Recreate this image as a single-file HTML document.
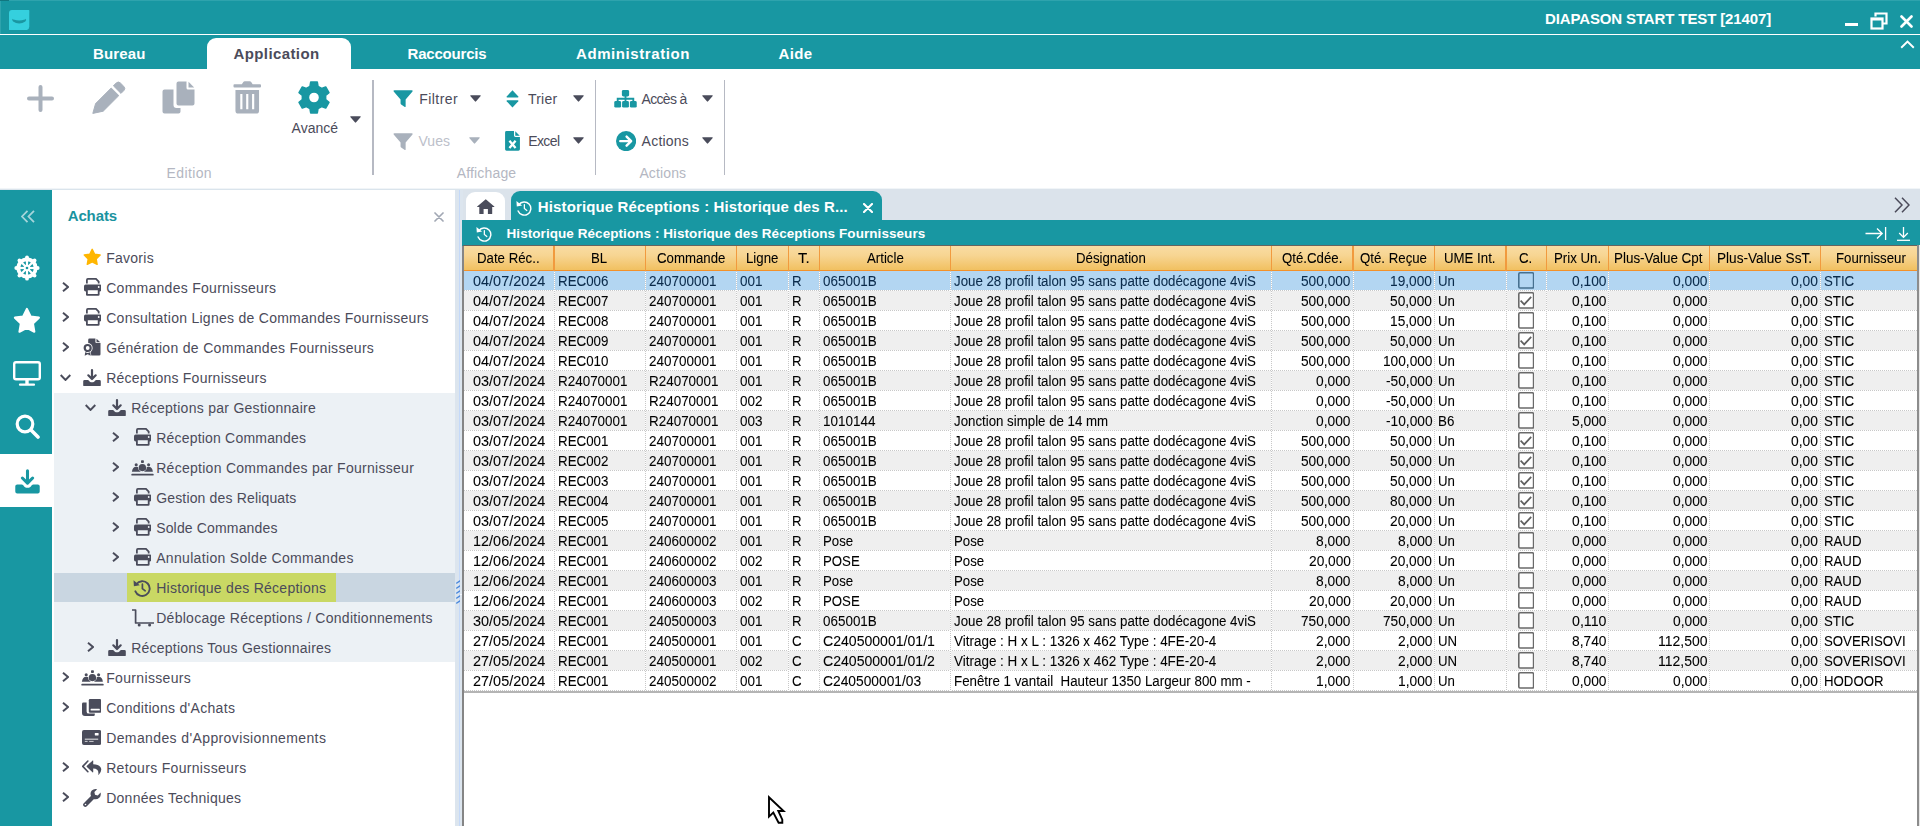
<!DOCTYPE html>
<html><head><meta charset="utf-8"><title>DIAPASON START TEST [21407]</title>
<style>
html,body{margin:0;padding:0;}
body{width:1920px;height:826px;overflow:hidden;background:#fff;position:relative;font-family:"Liberation Sans",sans-serif;}
.b{position:absolute;display:block;}
.t{position:absolute;white-space:pre;font-family:"Liberation Sans",sans-serif;}

.cb{width:13.2px;height:13.2px;border:1.6px solid #686868;background:#fff;border-radius:1.5px;}
.hl{position:absolute;height:1px;background-image:repeating-linear-gradient(90deg,#c8c8c8 0,#c8c8c8 1px,transparent 1px,transparent 2px);}
.vl{position:absolute;width:1px;background-color:#fff;background-image:repeating-linear-gradient(180deg,#c8c8c8 0,#c8c8c8 1px,transparent 1px,transparent 2px);}

</style></head><body>
<div class="b" style="left:0px;top:0px;width:1920px;height:34px;background:#1897a2;"></div>
<div class="b" style="left:0px;top:34px;width:1920px;height:1px;background:#ffffff;"></div>
<div class="b" style="left:0px;top:35px;width:1920px;height:34px;background:#1897a2;"></div>
<div class="b" style="left:0px;top:0px;width:1920px;height:1px;background:#2ea3ad;"></div>
<div class="b" style="left:0px;top:0px;width:1px;height:34px;background:#2ea3ad;"></div>
<div class="b" style="left:0px;top:0px;width:9px;height:1px;background:#127780;"></div>
<svg class="b" style="left:9.3px;top:9.9px;" width="20.3" height="20.1" viewBox="0 0 20.300 20.100"><path d="M3 0 H19.800 Q20.300 0 20.300 0.5 V16.600 Q20.300 20.100 16.800 20.100 H0.5 Q0 20.100 0 19.600 V3 Q0 0 3 0Z" fill="#35d0de"/><path d="M3.500 8.800 Q4.300 10.200 10.200 10.500 Q16.100 10.200 16.900 8.800 Q17.700 10.200 16.300 11.500 Q13.500 13.500 10.200 13.500 Q6.900 13.500 4.100 11.500 Q2.700 10.200 3.500 8.800Z" fill="#1a97a2"/></svg>
<div class="t" style="left:1545.00px;top:11.00px;font-size:15px;line-height:15px;color:#fff;font-weight:bold;letter-spacing:-0.129px;">DIAPASON START TEST [21407]</div>
<div class="b" style="left:1845px;top:23px;width:13px;height:2.5px;background:#fff;"></div>
<svg class="b" style="left:1870px;top:12px;" width="18" height="18" viewBox="0 0 18 18"><path d="M5.500 4.500 V1.500 H16.500 V11.500 H13" stroke="#fff" stroke-width="2.200" fill="none"/><rect x="1.500" y="6.500" width="11" height="10" stroke="#fff" stroke-width="2.200" fill="none"/><rect x="1.500" y="6" width="11" height="2.500" fill="#fff"/></svg>
<svg class="b" style="left:1900px;top:15px;" width="13" height="13" viewBox="0 0 13 13"><path d="M1.500 1.500 L11.500 11.500 M11.500 1.500 L1.500 11.500" stroke="#fff" stroke-width="2.600" fill="none" stroke-linecap="round"/></svg>
<svg class="b" style="left:1900px;top:40px;" width="15" height="9" viewBox="0 0 15 9"><path d="M1.200 7.800 L7.500 1.600 L13.800 7.800" stroke="#fff" stroke-width="1.900" fill="none"/></svg>
<div class="b" style="left:207px;top:38px;width:144px;height:31px;background:#fff;border-radius:9px 9px 0 0;"></div>
<div class="t" style="left:93.00px;top:45.80px;font-size:15px;line-height:15px;color:#fff;font-weight:bold;letter-spacing:0.153px;">Bureau</div>
<div class="t" style="left:233.50px;top:45.80px;font-size:15px;line-height:15px;color:#4b4b5a;font-weight:bold;letter-spacing:0.394px;">Application</div>
<div class="t" style="left:407.50px;top:45.80px;font-size:15px;line-height:15px;color:#fff;font-weight:bold;letter-spacing:-0.188px;">Raccourcis</div>
<div class="t" style="left:576.00px;top:45.80px;font-size:15px;line-height:15px;color:#fff;font-weight:bold;letter-spacing:0.583px;">Administration</div>
<div class="t" style="left:778.50px;top:45.80px;font-size:15px;line-height:15px;color:#fff;font-weight:bold;letter-spacing:0.374px;">Aide</div>
<svg class="b" style="left:27px;top:84.5px;" width="27" height="27" viewBox="0 0 27 27"><path d="M13.5 2v23M2 13.500h23" stroke="#a9b1bc" stroke-width="4" stroke-linecap="round" fill="none"/></svg>
<svg class="b" style="left:92px;top:81px;" width="34" height="33" viewBox="0 0 34 33"><path d="M0.8 32.4 L3.6 22.6 L19.2 7 L26.800 14.600 L11.2 30.2 Z" fill="#a9b1bc" stroke="#a9b1bc" stroke-width="1" stroke-linejoin="round"/><path d="M21.4 4.8 L24.2 2 Q26.3 0 28.4 2 L31.800 5.400 Q33.800 7.500 31.800 9.600 L29 12.400 Z" fill="#a9b1bc" stroke="#a9b1bc" stroke-width="1" stroke-linejoin="round"/></svg>
<svg class="b" style="left:162.3px;top:81px;" width="33" height="33" viewBox="0 0 33 33"><path d="M2.5 8.500 H11.5 V24 Q11.5 27 14.5 27 H18.5 V30.5 Q18.5 32.5 16.5 32.5 H2.5 Q0.5 32.5 0.5 30.5 V10.5 Q0.5 8.500 2.5 8.500Z" fill="#a9b1bc"/><path d="M16.500 0.5 H24.500 V7 Q24.500 8.500 26 8.500 H32.5 V22.500 Q32.5 24.500 30.5 24.500 H16.500 Q14.500 24.500 14.500 22.500 V2.500 Q14.500 0.5 16.500 0.5Z" fill="#a9b1bc"/><path d="M26.5 0.8 L32.2 6.500 H26.5Z" fill="#a9b1bc"/></svg>
<svg class="b" style="left:232.5px;top:81.2px;" width="28.5" height="32.8" viewBox="0 0 29 33"><path d="M1.5 3 H9 L10.500 0.8 Q11 0 12 0 H17 Q18 0 18.500 0.8 L20 3 H27.500 Q28.500 3 28.500 4 V5.500 Q28.500 6.500 27.500 6.500 H1.5 Q0.5 6.500 0.5 5.500 V4 Q0.5 3 1.5 3Z" fill="#a9b1bc"/><path d="M2.5 9 H26.5 V30 Q26.5 33 23.500 33 H5.500 Q2.5 33 2.5 30Z" fill="#a9b1bc"/><path d="M8.500 13v15.500M14.500 13v15.500M20.500 13v15.500" stroke="#fff" stroke-width="2.2" fill="none"/></svg>
<svg class="b" style="left:297.9px;top:80.7px;" width="32" height="33" viewBox="0 0 32 33"><path d="M12.00 5.40 L12.74 1.14 L19.26 1.14 L20.00 5.40 L23.62 7.49 L27.67 5.99 L30.93 11.65 L27.61 14.41 L27.61 18.59 L30.93 21.35 L27.67 27.01 L23.62 25.51 L20.00 27.60 L19.26 31.86 L12.74 31.86 L12.00 27.60 L8.38 25.51 L4.33 27.01 L1.07 21.35 L4.39 18.59 L4.39 14.41 L1.07 11.65 L4.33 5.99 L8.38 7.49Z M10.40 16.50 a5.60 5.60 0 1 0 11.20 0 a5.60 5.60 0 1 0 -11.20 0Z" fill="#1897a2" fill-rule="evenodd" stroke="#1897a2" stroke-width="1.6" stroke-linejoin="round"/></svg>
<div class="t" style="left:291.60px;top:120.65px;font-size:14px;line-height:14px;color:#4b4b5a;letter-spacing:-0.024px;">Avancé</div>
<svg class="b" style="left:350.2px;top:115.8px;" width="11" height="7" viewBox="0 0 11 7"><path d="M0.9 0.2 H10.100 Q11.300 0.2 10.500 1.200 L6.100 6.300 Q5.500 7 4.900 6.300 L0.5 1.200 Q-0.3 0.2 0.9 0.2Z" fill="#4a4c5b"/></svg>
<div class="b" style="left:372.4px;top:80px;width:1.2px;height:95px;background:#b6b9c3;"></div>
<div class="b" style="left:595px;top:80px;width:1.2px;height:95px;background:#b6b9c3;"></div>
<div class="b" style="left:724px;top:80px;width:1.2px;height:95px;background:#b6b9c3;"></div>
<svg class="b" style="left:393.4px;top:90px;" width="20.2" height="17.6" viewBox="0 0 20 18"><path d="M1.200 0.3 H18.800 Q20.500 0.3 19.400 1.900 L12.600 9.600 V16.600 Q12.600 18 11.400 17.200 L8 14.800 Q7.400 14.400 7.400 13.600 V9.600 L0.6 1.900 Q-0.5 0.3 1.200 0.3Z" fill="#1897a2"/></svg>
<div class="t" style="left:419.30px;top:91.95px;font-size:14px;line-height:14px;color:#4b4b5a;letter-spacing:0.432px;">Filtrer</div>
<svg class="b" style="left:469.6px;top:95.2px;" width="11" height="7" viewBox="0 0 11 7"><path d="M0.9 0.2 H10.100 Q11.300 0.2 10.500 1.200 L6.100 6.300 Q5.500 7 4.900 6.300 L0.5 1.200 Q-0.3 0.2 0.9 0.2Z" fill="#4a4c5b"/></svg>
<svg class="b" style="left:505.7px;top:90px;" width="13" height="17.8" viewBox="0 0 13 18"><path d="M6.500 0.3 L12.400 6.600 Q13 7.600 11.800 7.600 H1.200 Q0 7.600 0.6 6.600Z" fill="#1897a2"/><path d="M6.500 17.700 L12.400 11.400 Q13 10.400 11.800 10.400 H1.200 Q0 10.400 0.6 11.400Z" fill="#1897a2"/></svg>
<div class="t" style="left:527.90px;top:91.95px;font-size:14px;line-height:14px;color:#4b4b5a;letter-spacing:0.269px;">Trier</div>
<svg class="b" style="left:573.2px;top:95.2px;" width="11" height="7" viewBox="0 0 11 7"><path d="M0.9 0.2 H10.100 Q11.300 0.2 10.500 1.200 L6.100 6.300 Q5.500 7 4.900 6.300 L0.5 1.200 Q-0.3 0.2 0.9 0.2Z" fill="#4a4c5b"/></svg>
<svg class="b" style="left:614.4px;top:90px;" width="23" height="17.6" viewBox="0 0 23 18"><rect x="7.800" y="0" width="7.400" height="6.600" rx="1.500" fill="#1897a2"/><rect x="0" y="11.300" width="7" height="6.700" rx="1.500" fill="#1897a2"/><rect x="8" y="11.300" width="7" height="6.700" rx="1.500" fill="#1897a2"/><rect x="16" y="11.300" width="7" height="6.700" rx="1.500" fill="#1897a2"/><path d="M11.500 6v6M3.500 12V8.900H19.500V12" stroke="#1897a2" stroke-width="1.900" fill="none"/></svg>
<div class="t" style="left:641.60px;top:91.95px;font-size:14px;line-height:14px;color:#4b4b5a;letter-spacing:-0.686px;">Accès à</div>
<svg class="b" style="left:701.9px;top:95.2px;" width="11" height="7" viewBox="0 0 11 7"><path d="M0.9 0.2 H10.100 Q11.300 0.2 10.500 1.200 L6.100 6.300 Q5.500 7 4.900 6.300 L0.5 1.200 Q-0.3 0.2 0.9 0.2Z" fill="#4a4c5b"/></svg>
<svg class="b" style="left:393.4px;top:132.5px;" width="20.2" height="17.6" viewBox="0 0 20 18"><path d="M1.200 0.3 H18.800 Q20.500 0.3 19.400 1.900 L12.600 9.600 V16.600 Q12.600 18 11.400 17.200 L8 14.800 Q7.400 14.400 7.400 13.600 V9.600 L0.6 1.900 Q-0.5 0.3 1.200 0.3Z" fill="#a9b1bc"/></svg>
<div class="t" style="left:418.50px;top:134.15px;font-size:14px;line-height:14px;color:#bcc0ca;letter-spacing:0.027px;">Vues</div>
<svg class="b" style="left:469.4px;top:137.4px;" width="11" height="7" viewBox="0 0 11 7"><path d="M0.9 0.2 H10.100 Q11.300 0.2 10.500 1.200 L6.100 6.300 Q5.500 7 4.900 6.300 L0.5 1.200 Q-0.3 0.2 0.9 0.2Z" fill="#a9b1bc"/></svg>
<svg class="b" style="left:504.7px;top:131.3px;" width="15" height="19.8" viewBox="0 0 15 20"><path d="M1.500 0 H9 V4.500 Q9 6 10.500 6 H15 V18.500 Q15 20 13.500 20 H1.500 Q0 20 0 18.500 V1.500 Q0 0 1.500 0Z" fill="#1897a2"/><path d="M10.300 0.2 L14.800 4.800 H10.300Z" fill="#1897a2"/><path d="M4.400 9.800 L10.600 17.200 M10.600 9.800 L4.400 17.200" stroke="#fff" stroke-width="2.300" fill="none"/></svg>
<div class="t" style="left:528.20px;top:134.15px;font-size:14px;line-height:14px;color:#4b4b5a;letter-spacing:-0.607px;">Excel</div>
<svg class="b" style="left:573.2px;top:137.4px;" width="11" height="7" viewBox="0 0 11 7"><path d="M0.9 0.2 H10.100 Q11.300 0.2 10.500 1.200 L6.100 6.300 Q5.500 7 4.900 6.300 L0.5 1.200 Q-0.3 0.2 0.9 0.2Z" fill="#4a4c5b"/></svg>
<svg class="b" style="left:616px;top:131px;" width="20.2" height="20.2" viewBox="0 0 20 20"><circle cx="10" cy="10" r="10" fill="#1897a2"/><path d="M4.200 10 H14.500 M10.500 5.500 L15 10 L10.500 14.500" stroke="#fff" stroke-width="2.400" fill="none" stroke-linecap="round" stroke-linejoin="round"/></svg>
<div class="t" style="left:641.60px;top:134.15px;font-size:14px;line-height:14px;color:#4b4b5a;letter-spacing:0.227px;">Actions</div>
<svg class="b" style="left:701.9px;top:137.4px;" width="11" height="7" viewBox="0 0 11 7"><path d="M0.9 0.2 H10.100 Q11.300 0.2 10.500 1.200 L6.100 6.300 Q5.500 7 4.900 6.300 L0.5 1.200 Q-0.3 0.2 0.9 0.2Z" fill="#4a4c5b"/></svg>
<div class="t" style="left:166.60px;top:166.15px;font-size:14px;line-height:14px;color:#b4b7c2;letter-spacing:0.370px;">Edition</div>
<div class="t" style="left:456.70px;top:166.15px;font-size:14px;line-height:14px;color:#b4b7c2;letter-spacing:0.164px;">Affichage</div>
<div class="t" style="left:639.40px;top:166.15px;font-size:14px;line-height:14px;color:#b4b7c2;letter-spacing:0.127px;">Actions</div>
<div class="b" style="left:0px;top:188px;width:1920px;height:1px;background:#f1f5f8;"></div>
<div class="b" style="left:0px;top:189px;width:1920px;height:1px;background:#dae4ec;"></div>
<div class="b" style="left:0px;top:190px;width:52.4px;height:636px;background:#1897a2;"></div>
<div class="b" style="left:0px;top:454px;width:52.4px;height:53px;background:#fff;"></div>
<svg class="b" style="left:21px;top:210px;" width="14" height="13" viewBox="0 0 14 13"><path d="M6.500 0.8 L1 6.500 L6.500 12.200 M13 0.8 L7.500 6.500 L13 12.200" stroke="#a6d5da" stroke-width="1.800" fill="none"/></svg>
<svg class="b" style="left:14.3px;top:255.4px;" width="26" height="26" viewBox="0 0 26 26"><circle cx="13" cy="13" r="8.700" stroke="#fff" stroke-width="3.800" fill="none"/><path d="M15.00 13.00L21.00 13.00" stroke="#fff" stroke-width="2.200"/><circle cx="23.70" cy="13.00" r="1.900" fill="#fff"/><path d="M14.41 14.41L18.66 18.66" stroke="#fff" stroke-width="2.200"/><circle cx="20.57" cy="20.57" r="1.900" fill="#fff"/><path d="M13.00 15.00L13.00 21.00" stroke="#fff" stroke-width="2.200"/><circle cx="13.00" cy="23.70" r="1.900" fill="#fff"/><path d="M11.59 14.41L7.34 18.66" stroke="#fff" stroke-width="2.200"/><circle cx="5.43" cy="20.57" r="1.900" fill="#fff"/><path d="M11.00 13.00L5.00 13.00" stroke="#fff" stroke-width="2.200"/><circle cx="2.30" cy="13.00" r="1.900" fill="#fff"/><path d="M11.59 11.59L7.34 7.34" stroke="#fff" stroke-width="2.200"/><circle cx="5.43" cy="5.43" r="1.900" fill="#fff"/><path d="M13.00 11.00L13.00 5.00" stroke="#fff" stroke-width="2.200"/><circle cx="13.00" cy="2.30" r="1.900" fill="#fff"/><path d="M14.41 11.59L18.66 7.34" stroke="#fff" stroke-width="2.200"/><circle cx="20.57" cy="5.43" r="1.900" fill="#fff"/><circle cx="13" cy="13" r="3.300" fill="#fff"/><circle cx="13" cy="13" r="1.300" fill="#1897a2"/></svg>
<svg class="b" style="left:13.4px;top:306.6px;" width="27.8" height="27.8" viewBox="0 0 26 26"><path d="M13.00 1.80 L16.47 8.83 L24.22 9.95 L18.61 15.42 L19.94 23.15 L13.00 19.50 L6.06 23.15 L7.39 15.42 L1.78 9.95 L9.53 8.83Z" fill="#fff" stroke="#fff" stroke-width="2" stroke-linejoin="round"/></svg>
<svg class="b" style="left:13.2px;top:361.4px;" width="28" height="25" viewBox="0 0 28 25"><rect x="1.200" y="1.200" width="25.600" height="17" rx="1.800" stroke="#fff" stroke-width="2.400" fill="none"/><path d="M14 18.500v4.500" stroke="#fff" stroke-width="3.400"/><path d="M7 23.700h14" stroke="#fff" stroke-width="2.200" stroke-linecap="round"/></svg>
<svg class="b" style="left:15px;top:413.8px;" width="25" height="25" viewBox="0 0 25 25"><circle cx="10" cy="10" r="7.800" stroke="#fff" stroke-width="3.200" fill="none"/><path d="M16 16 L23 23" stroke="#fff" stroke-width="3.600" stroke-linecap="round"/></svg>
<svg class="b" style="left:15px;top:469px;" width="25" height="24.8" viewBox="0 0 18 17.500"><path d="M9 1.100 V9.400 M5.300 6.300 L9 10 L12.700 6.300" stroke="#1897a2" stroke-width="2.200" fill="none" stroke-linecap="round" stroke-linejoin="round"/><path d="M1.600 10.900 H4.800 Q5.400 10.900 5.800 11.400 L6.600 12.500 Q7.200 13.300 8 13.300 H10 Q10.800 13.300 11.400 12.500 L12.200 11.400 Q12.600 10.900 13.200 10.900 H16.400 Q17.800 10.900 17.800 12.300 V16.100 Q17.800 17.500 16.400 17.500 H1.600 Q0.2 17.500 0.2 16.100 V12.300 Q0.2 10.900 1.600 10.900Z" fill="#1897a2"/></svg>
<div class="b" style="left:52px;top:190px;width:403px;height:636px;background:#fff;"></div>
<div class="t" style="left:67.70px;top:207.60px;font-size:15px;line-height:15px;color:#1a93a0;font-weight:bold;letter-spacing:-0.120px;">Achats</div>
<svg class="b" style="left:433.8px;top:211.6px;" width="10" height="10" viewBox="0 0 10 10"><path d="M1 1 L9 9 M9 1 L1 9" stroke="#a2a8b4" stroke-width="1.7" fill="none" stroke-linecap="round"/></svg>
<div class="b" style="left:54px;top:392.5px;width:401px;height:269.7px;background:#ecf1f5;"></div>
<div class="b" style="left:54px;top:572.7px;width:401px;height:29.3px;background:#c9d6e1;"></div>
<div class="b" style="left:127px;top:573px;width:209px;height:29px;background:#c9d864;"></div>
<svg class="b" style="left:82.6px;top:248.0px;" width="18.4" height="18.4" viewBox="0 0 26 26"><path d="M13.00 1.80 L16.47 8.83 L24.22 9.95 L18.61 15.42 L19.94 23.15 L13.00 19.50 L6.06 23.15 L7.39 15.42 L1.78 9.95 L9.53 8.83Z" fill="#ffb600" stroke="#ffb600" stroke-width="2" stroke-linejoin="round"/></svg>
<div class="t" style="left:106.20px;top:250.65px;font-size:14px;line-height:14px;color:#4b4b5a;letter-spacing:0.257px;">Favoris</div>
<svg class="b" style="left:62px;top:281.8px;" width="7" height="10" viewBox="0 0 7 10"><path d="M1 0.7 L6 5 L1 9.300" stroke="#4a4c5b" stroke-width="1.900" fill="none"/></svg>
<svg class="b" style="left:83.60000000000001px;top:278.40000000000003px;" width="17.6" height="17.8" viewBox="0 0 17.600 17.800"><path d="M2.900 5.600 V1.900 Q2.900 0.9 3.900 0.9 H12 L14.700 3.600 V5.600" stroke="#4a4c5b" stroke-width="1.750" fill="none"/><rect x="0" y="6.500" width="17.600" height="6.900" rx="1.700" fill="#4a4c5b"/><rect x="2.900" y="11.300" width="11.800" height="5.600" rx="0.4" stroke="#4a4c5b" stroke-width="1.800" fill="#fff"/><circle cx="14.700" cy="9" r="0.9" fill="#fff"/></svg>
<div class="t" style="left:106.20px;top:280.65px;font-size:14px;line-height:14px;color:#4b4b5a;letter-spacing:0.274px;">Commandes Fournisseurs</div>
<svg class="b" style="left:62px;top:311.8px;" width="7" height="10" viewBox="0 0 7 10"><path d="M1 0.7 L6 5 L1 9.300" stroke="#4a4c5b" stroke-width="1.900" fill="none"/></svg>
<svg class="b" style="left:83.60000000000001px;top:308.40000000000003px;" width="17.6" height="17.8" viewBox="0 0 17.600 17.800"><path d="M2.900 5.600 V1.900 Q2.900 0.9 3.900 0.9 H12 L14.700 3.600 V5.600" stroke="#4a4c5b" stroke-width="1.750" fill="none"/><rect x="0" y="6.500" width="17.600" height="6.900" rx="1.700" fill="#4a4c5b"/><rect x="2.900" y="11.300" width="11.800" height="5.600" rx="0.4" stroke="#4a4c5b" stroke-width="1.800" fill="#fff"/><circle cx="14.700" cy="9" r="0.9" fill="#fff"/></svg>
<div class="t" style="left:106.20px;top:310.65px;font-size:14px;line-height:14px;color:#4b4b5a;letter-spacing:0.271px;">Consultation Lignes de Commandes Fournisseurs</div>
<svg class="b" style="left:62px;top:341.8px;" width="7" height="10" viewBox="0 0 7 10"><path d="M1 0.7 L6 5 L1 9.300" stroke="#4a4c5b" stroke-width="1.900" fill="none"/></svg>
<svg class="b" style="left:83.2px;top:338.3px;" width="18" height="18" viewBox="0 0 18 18"><path d="M6.500 0.6 H12.400 V4 Q12.400 5 13.400 5 H17.500 V16.300 Q17.500 17.600 16.200 17.600 H6.500 Q5.200 17.600 5.200 16.300 V1.900 Q5.200 0.6 6.500 0.6Z" fill="#4a4c5b"/><path d="M13.500 0.8 L17.300 4.200 H13.500Z" fill="#4a4c5b"/><path d="M2.400 12.500 L1.700 17.800 L4.700 16.200 L7.700 17.800 L7 12.500Z" fill="#4a4c5b" stroke="#fff" stroke-width="1.200" paint-order="stroke"/><circle cx="4.700" cy="10" r="4.900" fill="#fff"/><circle cx="4.700" cy="10" r="3" stroke="#4a4c5b" stroke-width="2.200" fill="#fff"/></svg>
<div class="t" style="left:106.20px;top:340.65px;font-size:14px;line-height:14px;color:#4b4b5a;letter-spacing:0.311px;">Génération de Commandes Fournisseurs</div>
<svg class="b" style="left:60.2px;top:374.3px;" width="11" height="7" viewBox="0 0 11 7"><path d="M0.7 1 L5.500 6 L10.300 1" stroke="#4a4c5b" stroke-width="1.900" fill="none"/></svg>
<svg class="b" style="left:83.2px;top:368.5px;" width="18" height="17.5" viewBox="0 0 18 17.500"><path d="M9 1.100 V9.400 M5.300 6.300 L9 10 L12.700 6.300" stroke="#4a4c5b" stroke-width="2.200" fill="none" stroke-linecap="round" stroke-linejoin="round"/><path d="M1.600 10.900 H4.800 Q5.400 10.900 5.800 11.400 L6.600 12.500 Q7.200 13.300 8 13.300 H10 Q10.800 13.300 11.400 12.500 L12.200 11.400 Q12.600 10.900 13.200 10.900 H16.400 Q17.800 10.900 17.800 12.300 V16.100 Q17.800 17.500 16.400 17.500 H1.600 Q0.2 17.500 0.2 16.100 V12.300 Q0.2 10.900 1.600 10.900Z" fill="#4a4c5b"/></svg>
<div class="t" style="left:106.20px;top:370.65px;font-size:14px;line-height:14px;color:#4b4b5a;letter-spacing:0.246px;">Réceptions Fournisseurs</div>
<svg class="b" style="left:85.2px;top:404.3px;" width="11" height="7" viewBox="0 0 11 7"><path d="M0.7 1 L5.500 6 L10.300 1" stroke="#4a4c5b" stroke-width="1.900" fill="none"/></svg>
<svg class="b" style="left:108.2px;top:398.5px;" width="18" height="17.5" viewBox="0 0 18 17.500"><path d="M9 1.100 V9.400 M5.300 6.300 L9 10 L12.700 6.300" stroke="#4a4c5b" stroke-width="2.200" fill="none" stroke-linecap="round" stroke-linejoin="round"/><path d="M1.600 10.900 H4.800 Q5.400 10.900 5.800 11.400 L6.600 12.500 Q7.200 13.300 8 13.300 H10 Q10.800 13.300 11.400 12.500 L12.200 11.400 Q12.600 10.900 13.200 10.900 H16.400 Q17.800 10.900 17.800 12.300 V16.100 Q17.800 17.500 16.400 17.500 H1.600 Q0.2 17.500 0.2 16.100 V12.300 Q0.2 10.900 1.600 10.900Z" fill="#4a4c5b"/></svg>
<div class="t" style="left:131.20px;top:400.65px;font-size:14px;line-height:14px;color:#4b4b5a;letter-spacing:0.276px;">Réceptions par Gestionnaire</div>
<svg class="b" style="left:112px;top:431.8px;" width="7" height="10" viewBox="0 0 7 10"><path d="M1 0.7 L6 5 L1 9.300" stroke="#4a4c5b" stroke-width="1.900" fill="none"/></svg>
<svg class="b" style="left:133.6px;top:428.40000000000003px;" width="17.6" height="17.8" viewBox="0 0 17.600 17.800"><path d="M2.900 5.600 V1.900 Q2.900 0.9 3.900 0.9 H12 L14.700 3.600 V5.600" stroke="#4a4c5b" stroke-width="1.750" fill="none"/><rect x="0" y="6.500" width="17.600" height="6.900" rx="1.700" fill="#4a4c5b"/><rect x="2.900" y="11.300" width="11.800" height="5.600" rx="0.4" stroke="#4a4c5b" stroke-width="1.800" fill="#ecf1f5"/><circle cx="14.700" cy="9" r="0.9" fill="#ecf1f5"/></svg>
<div class="t" style="left:156.20px;top:430.65px;font-size:14px;line-height:14px;color:#4b4b5a;letter-spacing:0.200px;">Réception Commandes</div>
<svg class="b" style="left:112px;top:461.8px;" width="7" height="10" viewBox="0 0 7 10"><path d="M1 0.7 L6 5 L1 9.300" stroke="#4a4c5b" stroke-width="1.900" fill="none"/></svg>
<svg class="b" style="left:131.0px;top:459.6px;" width="23" height="16" viewBox="0 0 23 16"><circle cx="5.2" cy="4.700" r="1.550" fill="#4a4c5b"/><path d="M0.90 11.800 Q1.60 6.700 5.20 6.700 Q8.80 6.700 9.50 11.800Z" fill="#4a4c5b"/><circle cx="17.6" cy="4.700" r="1.550" fill="#4a4c5b"/><path d="M13.30 11.800 Q14.00 6.700 17.60 6.700 Q21.20 6.700 21.90 11.800Z" fill="#4a4c5b"/><rect x="10" y="0.2" width="2.900" height="2.900" rx="0.8" fill="#4a4c5b"/><path d="M7.600 9.300 Q7.300 4 11.400 4 Q15.500 4 15.200 9.300 Q11.400 13.200 7.600 9.300Z" fill="#4a4c5b" stroke="#ecf1f5" stroke-width="1" paint-order="stroke"/><rect x="0.3" y="13.700" width="22.400" height="1.900" rx="0.9" fill="#4a4c5b"/></svg>
<div class="t" style="left:156.20px;top:460.65px;font-size:14px;line-height:14px;color:#4b4b5a;letter-spacing:0.276px;">Réception Commandes par Fournisseur</div>
<svg class="b" style="left:112px;top:491.8px;" width="7" height="10" viewBox="0 0 7 10"><path d="M1 0.7 L6 5 L1 9.300" stroke="#4a4c5b" stroke-width="1.900" fill="none"/></svg>
<svg class="b" style="left:133.6px;top:488.40000000000003px;" width="17.6" height="17.8" viewBox="0 0 17.600 17.800"><path d="M2.900 5.600 V1.900 Q2.900 0.9 3.900 0.9 H12 L14.700 3.600 V5.600" stroke="#4a4c5b" stroke-width="1.750" fill="none"/><rect x="0" y="6.500" width="17.600" height="6.900" rx="1.700" fill="#4a4c5b"/><rect x="2.900" y="11.300" width="11.800" height="5.600" rx="0.4" stroke="#4a4c5b" stroke-width="1.800" fill="#ecf1f5"/><circle cx="14.700" cy="9" r="0.9" fill="#ecf1f5"/></svg>
<div class="t" style="left:156.20px;top:490.65px;font-size:14px;line-height:14px;color:#4b4b5a;letter-spacing:0.159px;">Gestion des Reliquats</div>
<svg class="b" style="left:112px;top:521.8px;" width="7" height="10" viewBox="0 0 7 10"><path d="M1 0.7 L6 5 L1 9.300" stroke="#4a4c5b" stroke-width="1.900" fill="none"/></svg>
<svg class="b" style="left:133.6px;top:518.4px;" width="17.6" height="17.8" viewBox="0 0 17.600 17.800"><path d="M2.900 5.600 V1.900 Q2.900 0.9 3.900 0.9 H12 L14.700 3.600 V5.600" stroke="#4a4c5b" stroke-width="1.750" fill="none"/><rect x="0" y="6.500" width="17.600" height="6.900" rx="1.700" fill="#4a4c5b"/><rect x="2.900" y="11.300" width="11.800" height="5.600" rx="0.4" stroke="#4a4c5b" stroke-width="1.800" fill="#ecf1f5"/><circle cx="14.700" cy="9" r="0.9" fill="#ecf1f5"/></svg>
<div class="t" style="left:156.20px;top:520.65px;font-size:14px;line-height:14px;color:#4b4b5a;letter-spacing:0.156px;">Solde Commandes</div>
<svg class="b" style="left:112px;top:551.8px;" width="7" height="10" viewBox="0 0 7 10"><path d="M1 0.7 L6 5 L1 9.300" stroke="#4a4c5b" stroke-width="1.900" fill="none"/></svg>
<svg class="b" style="left:133.6px;top:548.4px;" width="17.6" height="17.8" viewBox="0 0 17.600 17.800"><path d="M2.900 5.600 V1.900 Q2.900 0.9 3.900 0.9 H12 L14.700 3.600 V5.600" stroke="#4a4c5b" stroke-width="1.750" fill="none"/><rect x="0" y="6.500" width="17.600" height="6.900" rx="1.700" fill="#4a4c5b"/><rect x="2.900" y="11.300" width="11.800" height="5.600" rx="0.4" stroke="#4a4c5b" stroke-width="1.800" fill="#ecf1f5"/><circle cx="14.700" cy="9" r="0.9" fill="#ecf1f5"/></svg>
<div class="t" style="left:156.20px;top:550.65px;font-size:14px;line-height:14px;color:#4b4b5a;letter-spacing:0.326px;">Annulation Solde Commandes</div>
<svg class="b" style="left:133.0px;top:578.5px;" width="18" height="18" viewBox="0 0 18 18"><path d="M3.300 5.200 A7.400 7.400 0 1 1 2.400 12.300" stroke="#4a4c5b" stroke-width="1.9" fill="none" stroke-linecap="round"/><path d="M0.5 1.200 L0.9 7.200 L6.800 6.300 Z" fill="#4a4c5b"/><path d="M9.400 5.200 V9.600 L12.200 11.800" stroke="#4a4c5b" stroke-width="1.7" fill="none" stroke-linecap="round"/></svg>
<div class="t" style="left:156.20px;top:580.65px;font-size:14px;line-height:14px;color:#4b4b5a;letter-spacing:0.271px;">Historique des Réceptions</div>
<svg class="b" style="left:131.89999999999998px;top:608.5px;" width="22" height="18" viewBox="0 0 22 18"><path d="M0.6 1 H3.600 V14 H21.400" stroke="#4a4c5b" stroke-width="1.700" fill="none" stroke-linecap="round" stroke-linejoin="round"/><circle cx="7.200" cy="16" r="1.500" fill="#4a4c5b"/><circle cx="17.600" cy="16" r="1.500" fill="#4a4c5b"/></svg>
<div class="t" style="left:156.20px;top:610.65px;font-size:14px;line-height:14px;color:#4b4b5a;letter-spacing:0.285px;">Déblocage Réceptions / Conditionnements</div>
<svg class="b" style="left:87px;top:641.8px;" width="7" height="10" viewBox="0 0 7 10"><path d="M1 0.7 L6 5 L1 9.300" stroke="#4a4c5b" stroke-width="1.900" fill="none"/></svg>
<svg class="b" style="left:108.2px;top:638.5px;" width="18" height="17.5" viewBox="0 0 18 17.500"><path d="M9 1.100 V9.400 M5.300 6.300 L9 10 L12.700 6.300" stroke="#4a4c5b" stroke-width="2.200" fill="none" stroke-linecap="round" stroke-linejoin="round"/><path d="M1.600 10.900 H4.800 Q5.400 10.900 5.800 11.400 L6.600 12.500 Q7.200 13.300 8 13.300 H10 Q10.800 13.300 11.400 12.500 L12.200 11.400 Q12.600 10.900 13.200 10.900 H16.400 Q17.800 10.900 17.800 12.300 V16.100 Q17.800 17.500 16.400 17.500 H1.600 Q0.2 17.500 0.2 16.100 V12.300 Q0.2 10.900 1.600 10.900Z" fill="#4a4c5b"/></svg>
<div class="t" style="left:131.20px;top:640.65px;font-size:14px;line-height:14px;color:#4b4b5a;letter-spacing:0.227px;">Réceptions Tous Gestionnaires</div>
<svg class="b" style="left:62px;top:671.8px;" width="7" height="10" viewBox="0 0 7 10"><path d="M1 0.7 L6 5 L1 9.300" stroke="#4a4c5b" stroke-width="1.900" fill="none"/></svg>
<svg class="b" style="left:81.0px;top:669.5999999999999px;" width="23" height="16" viewBox="0 0 23 16"><circle cx="5.2" cy="4.700" r="1.550" fill="#4a4c5b"/><path d="M0.90 11.800 Q1.60 6.700 5.20 6.700 Q8.80 6.700 9.50 11.800Z" fill="#4a4c5b"/><circle cx="17.6" cy="4.700" r="1.550" fill="#4a4c5b"/><path d="M13.30 11.800 Q14.00 6.700 17.60 6.700 Q21.20 6.700 21.90 11.800Z" fill="#4a4c5b"/><rect x="10" y="0.2" width="2.900" height="2.900" rx="0.8" fill="#4a4c5b"/><path d="M7.600 9.300 Q7.300 4 11.400 4 Q15.500 4 15.200 9.300 Q11.400 13.200 7.600 9.300Z" fill="#4a4c5b" stroke="#fff" stroke-width="1" paint-order="stroke"/><rect x="0.3" y="13.700" width="22.400" height="1.900" rx="0.9" fill="#4a4c5b"/></svg>
<div class="t" style="left:106.20px;top:670.65px;font-size:14px;line-height:14px;color:#4b4b5a;letter-spacing:0.340px;">Fournisseurs</div>
<svg class="b" style="left:62px;top:701.8px;" width="7" height="10" viewBox="0 0 7 10"><path d="M1 0.7 L6 5 L1 9.300" stroke="#4a4c5b" stroke-width="1.900" fill="none"/></svg>
<svg class="b" style="left:82.2px;top:698.8px;" width="19.2" height="17" viewBox="0 0 19.200 17"><path d="M1.400 3.600 H4.600 V12.400 Q4.600 14.600 6.800 14.600 H12.800 V15.700 Q12.800 17 11.500 17 H3 Q0 17 0 14 V5 Q0 3.600 1.400 3.600Z" fill="#4a4c5b"/><rect x="6.800" y="0" width="12.400" height="13.700" rx="1.300" fill="#4a4c5b"/><rect x="8.600" y="9.800" width="9.200" height="1.700" rx="0.5" fill="#fff"/></svg>
<div class="t" style="left:106.20px;top:700.65px;font-size:14px;line-height:14px;color:#4b4b5a;letter-spacing:0.300px;">Conditions d'Achats</div>
<svg class="b" style="left:82.0px;top:729.8px;" width="19.3" height="15" viewBox="0 0 19.300 15"><rect x="0" y="0" width="19.300" height="15" rx="1.900" fill="#4a4c5b"/><rect x="12.800" y="2.900" width="3.800" height="2.500" rx="0.4" fill="#fff"/><rect x="2.800" y="8.700" width="13.400" height="0.9" fill="#fff"/><rect x="2.800" y="10.900" width="2.800" height="0.9" fill="#fff" opacity="0.8"/><rect x="7.200" y="10.900" width="4.400" height="0.9" fill="#fff" opacity="0.8"/></svg>
<div class="t" style="left:106.20px;top:730.65px;font-size:14px;line-height:14px;color:#4b4b5a;letter-spacing:0.386px;">Demandes d'Approvisionnements</div>
<svg class="b" style="left:62px;top:761.8px;" width="7" height="10" viewBox="0 0 7 10"><path d="M1 0.7 L6 5 L1 9.300" stroke="#4a4c5b" stroke-width="1.900" fill="none"/></svg>
<svg class="b" style="left:82.0px;top:759.6999999999999px;" width="20.3" height="16" viewBox="0 0 19 15"><path d="M10.500 4 V0.8 Q10.500 0 9.800 0.6 L4.600 5.400 Q4 6 4.600 6.600 L9.800 11.400 Q10.500 12 10.500 11.200 V8 Q16 8 15.300 13.500 Q15.200 14.600 15.900 13.700 Q19.400 9.500 17.200 6.500 Q15.300 4 10.500 4Z" fill="#4a4c5b"/><path d="M5.500 1 L0.7 6 L5.500 11" stroke="#4a4c5b" stroke-width="1.500" fill="none" stroke-linecap="round" stroke-linejoin="round"/><path d="M7.800 2.500 L4.400 6 L7.800 9.500" stroke="#fff" stroke-width="0" fill="none"/></svg>
<div class="t" style="left:106.20px;top:760.65px;font-size:14px;line-height:14px;color:#4b4b5a;letter-spacing:0.323px;">Retours Fournisseurs</div>
<svg class="b" style="left:62px;top:791.8px;" width="7" height="10" viewBox="0 0 7 10"><path d="M1 0.7 L6 5 L1 9.300" stroke="#4a4c5b" stroke-width="1.900" fill="none"/></svg>
<svg class="b" style="left:82.7px;top:788.5px;" width="18" height="18" viewBox="0 0 18 18"><path d="M2.300 15.700 L10.200 7.800" stroke="#4a4c5b" stroke-width="4.300" stroke-linecap="round"/><path d="M17.600 3.600 L14.800 6.400 L12 5.800 L11.400 3 L14.200 0.3 Q11 -0.6 8.800 1.600 Q6.800 3.800 7.900 6.800 L10.200 10 Q13.800 11 16.300 8.800 Q18.300 6.700 17.600 3.600Z" fill="#4a4c5b"/><circle cx="2.500" cy="15.500" r="0.8" fill="#fff"/></svg>
<div class="t" style="left:106.20px;top:790.65px;font-size:14px;line-height:14px;color:#4b4b5a;letter-spacing:0.255px;">Données Techniques</div>
<div class="b" style="left:455px;top:190px;width:8px;height:636px;background:#dce5ee;"></div>
<div class="b" style="left:459px;top:190px;width:1px;height:636px;background:#c4d9f9;"></div>
<svg class="b" style="left:455.5px;top:580.2px;" width="4.5" height="4" viewBox="0 0 4.500 4"><path d="M0.8 3 L3.700 1" stroke="#4a88dc" stroke-width="1.500" stroke-linecap="round"/></svg>
<svg class="b" style="left:455.5px;top:585.2px;" width="4.5" height="4" viewBox="0 0 4.500 4"><path d="M0.8 3 L3.700 1" stroke="#4a88dc" stroke-width="1.500" stroke-linecap="round"/></svg>
<svg class="b" style="left:455.5px;top:590.2px;" width="4.5" height="4" viewBox="0 0 4.500 4"><path d="M0.8 3 L3.700 1" stroke="#4a88dc" stroke-width="1.500" stroke-linecap="round"/></svg>
<svg class="b" style="left:455.5px;top:595.2px;" width="4.5" height="4" viewBox="0 0 4.500 4"><path d="M0.8 3 L3.700 1" stroke="#4a88dc" stroke-width="1.500" stroke-linecap="round"/></svg>
<svg class="b" style="left:455.5px;top:600.2px;" width="4.5" height="4" viewBox="0 0 4.500 4"><path d="M0.8 3 L3.700 1" stroke="#4a88dc" stroke-width="1.500" stroke-linecap="round"/></svg>
<div class="b" style="left:459.8px;top:593.8px;width:2.4px;height:1.2px;background:#f4f8ff;"></div>
<div class="b" style="left:463px;top:189px;width:1457px;height:31.5px;background:#dbe3eb;"></div>
<div class="b" style="left:462.2px;top:245px;width:1.6px;height:581px;background:#858585;"></div>
<div class="b" style="left:466px;top:192px;width:38.5px;height:28.5px;background:#fff;border-radius:9px 9px 0 0;"></div>
<svg class="b" style="left:477px;top:198.6px;" width="17.5" height="15.5" viewBox="0 0 17.500 15.500"><path d="M8.750 0.3 L17.300 7.400 Q17.700 7.900 17 7.900 H15.200 V14.600 Q15.200 15.300 14.500 15.300 H10.900 V10 H6.600 V15.300 H3 Q2.300 15.300 2.300 14.600 V7.900 H0.5 Q-0.2 7.900 0.2 7.400 Z" fill="#4a4c5b"/></svg>
<div class="b" style="left:510.5px;top:191px;width:371px;height:29.5px;background:#1897a2;border-radius:9px 9px 0 0;"></div>
<svg class="b" style="left:516px;top:199.6px;" width="16" height="16" viewBox="0 0 18 18"><path d="M3.300 5.200 A7.400 7.400 0 1 1 2.400 12.300" stroke="#fff" stroke-width="1.6" fill="none" stroke-linecap="round"/><path d="M0.5 1.200 L0.9 7.200 L6.800 6.300 Z" fill="#fff"/><path d="M9.400 5.200 V9.600 L12.200 11.800" stroke="#fff" stroke-width="1.4000000000000001" fill="none" stroke-linecap="round"/></svg>
<div class="t" style="left:537.80px;top:199.30px;font-size:15px;line-height:15px;color:#fff;font-weight:bold;letter-spacing:0.135px;">Historique Réceptions : Historique des R...</div>
<svg class="b" style="left:862.5px;top:203px;" width="10" height="10" viewBox="0 0 10 10"><path d="M1 1 L9 9 M9 1 L1 9" stroke="#fff" stroke-width="2.1" fill="none" stroke-linecap="round"/></svg>
<svg class="b" style="left:1894px;top:197px;" width="16" height="16" viewBox="0 0 16 16"><path d="M1 0.8 L8 8 L1 15.200 M8 0.8 L15 8 L8 15.200" stroke="#4b4b5a" stroke-width="1.500" fill="none"/></svg>
<div class="b" style="left:462.4px;top:220px;width:1457.6px;height:25.5px;background:#1897a2;"></div>
<svg class="b" style="left:476px;top:225.6px;" width="16" height="16" viewBox="0 0 18 18"><path d="M3.300 5.200 A7.400 7.400 0 1 1 2.400 12.300" stroke="#fff" stroke-width="1.6" fill="none" stroke-linecap="round"/><path d="M0.5 1.200 L0.9 7.200 L6.800 6.300 Z" fill="#fff"/><path d="M9.400 5.200 V9.600 L12.200 11.800" stroke="#fff" stroke-width="1.4000000000000001" fill="none" stroke-linecap="round"/></svg>
<div class="t" style="left:506.50px;top:227.07px;font-size:13.5px;line-height:13.5px;color:#fff;font-weight:bold;letter-spacing:0.064px;">Historique Réceptions : Historique des Réceptions Fournisseurs</div>
<svg class="b" style="left:1864.5px;top:227.3px;" width="22" height="13" viewBox="0 0 22 13"><path d="M0.5 6.500 H17 M12 1.500 L17.200 6.500 L12 11.500" stroke="#fff" stroke-width="1.300" fill="none"/><path d="M20.600 0 V13" stroke="#fff" stroke-width="1.300"/></svg>
<svg class="b" style="left:1897px;top:227px;" width="13" height="14" viewBox="0 0 13 14"><path d="M6.500 0 V10 M2.200 6 L6.500 10.400 L10.800 6" stroke="#fff" stroke-width="1.300" fill="none"/><path d="M0 13.300 H13" stroke="#fff" stroke-width="1.300"/></svg>
<div class="b" style="left:463px;top:245px;width:1455px;height:1px;background:#66645f;"></div>
<div class="b" style="left:463.6px;top:246px;width:1453.6999999999998px;height:24px;background:linear-gradient(180deg,#f9dca3 0,#f7d592 40%,#f1c060 100%);"></div>
<div class="b" style="left:463.6px;top:269.9px;width:1453.6999999999998px;height:1.4px;background:#f3912a;"></div>
<div class="b" style="left:553.3px;top:246px;width:1.4px;height:24.5px;background:#f19a3e;"></div>
<div class="b" style="left:644.6px;top:246px;width:1.4px;height:24.5px;background:#f19a3e;"></div>
<div class="b" style="left:736.0px;top:246px;width:1.4px;height:24.5px;background:#f19a3e;"></div>
<div class="b" style="left:787.6px;top:246px;width:1.4px;height:24.5px;background:#f19a3e;"></div>
<div class="b" style="left:818.8px;top:246px;width:1.4px;height:24.5px;background:#f19a3e;"></div>
<div class="b" style="left:950.0px;top:246px;width:1.4px;height:24.5px;background:#f19a3e;"></div>
<div class="b" style="left:1271.0px;top:246px;width:1.4px;height:24.5px;background:#f19a3e;"></div>
<div class="b" style="left:1352.2px;top:246px;width:1.4px;height:24.5px;background:#f19a3e;"></div>
<div class="b" style="left:1434.0px;top:246px;width:1.4px;height:24.5px;background:#f19a3e;"></div>
<div class="b" style="left:1505.2px;top:246px;width:1.4px;height:24.5px;background:#f19a3e;"></div>
<div class="b" style="left:1545.7px;top:246px;width:1.4px;height:24.5px;background:#f19a3e;"></div>
<div class="b" style="left:1607.6000000000001px;top:246px;width:1.4px;height:24.5px;background:#f19a3e;"></div>
<div class="b" style="left:1708.7px;top:246px;width:1.4px;height:24.5px;background:#f19a3e;"></div>
<div class="b" style="left:1819.7px;top:246px;width:1.4px;height:24.5px;background:#f19a3e;"></div>
<div class="b" style="left:0;top:0;width:1920px;height:826px;will-change:transform;">
<div class="t" style="left:477.44px;top:250.46px;font-size:15.4px;line-height:15.4px;color:#000;transform:scaleX(0.8608);transform-origin:0 0;-webkit-text-stroke:0.08px;">Date Réc..</div>
<div class="t" style="left:591.46px;top:250.46px;font-size:15.4px;line-height:15.4px;color:#000;transform:scaleX(0.8591);transform-origin:0 0;-webkit-text-stroke:0.08px;">BL</div>
<div class="t" style="left:656.71px;top:250.46px;font-size:15.4px;line-height:15.4px;color:#000;transform:scaleX(0.8591);transform-origin:0 0;-webkit-text-stroke:0.08px;">Commande</div>
<div class="t" style="left:746.21px;top:250.46px;font-size:15.4px;line-height:15.4px;color:#000;transform:scaleX(0.8591);transform-origin:0 0;-webkit-text-stroke:0.08px;">Ligne</div>
<div class="t" style="left:797.91px;top:250.46px;font-size:15.4px;line-height:15.4px;color:#000;transform:scaleX(0.9836);transform-origin:0 0;-webkit-text-stroke:0.08px;">T.</div>
<div class="t" style="left:866.62px;top:250.46px;font-size:15.4px;line-height:15.4px;color:#000;transform:scaleX(0.8591);transform-origin:0 0;-webkit-text-stroke:0.08px;">Article</div>
<div class="t" style="left:1076.16px;top:250.46px;font-size:15.4px;line-height:15.4px;color:#000;transform:scaleX(0.8591);transform-origin:0 0;-webkit-text-stroke:0.08px;">Désignation</div>
<div class="t" style="left:1282.02px;top:250.46px;font-size:15.4px;line-height:15.4px;color:#000;transform:scaleX(0.8598);transform-origin:0 0;-webkit-text-stroke:0.08px;">Qté.Cdée.</div>
<div class="t" style="left:1360.19px;top:250.46px;font-size:15.4px;line-height:15.4px;color:#000;transform:scaleX(0.8604);transform-origin:0 0;-webkit-text-stroke:0.08px;">Qté. Reçue</div>
<div class="t" style="left:1444.42px;top:250.46px;font-size:15.4px;line-height:15.4px;color:#000;transform:scaleX(0.8607);transform-origin:0 0;-webkit-text-stroke:0.08px;">UME Int.</div>
<div class="t" style="left:1519.42px;top:250.46px;font-size:15.4px;line-height:15.4px;color:#000;transform:scaleX(0.8607);transform-origin:0 0;-webkit-text-stroke:0.08px;">C.</div>
<div class="t" style="left:1553.68px;top:250.46px;font-size:15.4px;line-height:15.4px;color:#000;transform:scaleX(0.8609);transform-origin:0 0;-webkit-text-stroke:0.08px;">Prix Un.</div>
<div class="t" style="left:1614.49px;top:250.46px;font-size:15.4px;line-height:15.4px;color:#000;transform:scaleX(0.8714);transform-origin:0 0;-webkit-text-stroke:0.08px;">Plus-Value Cpt</div>
<div class="t" style="left:1717.23px;top:250.46px;font-size:15.4px;line-height:15.4px;color:#000;transform:scaleX(0.8846);transform-origin:0 0;-webkit-text-stroke:0.08px;">Plus-Value SsT.</div>
<div class="t" style="left:1836.37px;top:250.46px;font-size:15.4px;line-height:15.4px;color:#000;transform:scaleX(0.8591);transform-origin:0 0;-webkit-text-stroke:0.08px;">Fournisseur</div>
<div class="b" style="left:463.6px;top:271.2px;width:1453.6999999999998px;height:19px;background:#b3d6f2;"></div>
<div class="t" style="left:472.75px;top:272.86px;font-size:15.4px;line-height:15.4px;color:#0a2a4a;transform:scaleX(0.9393);transform-origin:0 0;-webkit-text-stroke:0.08px;">04/07/2024</div>
<div class="t" style="left:557.50px;top:272.86px;font-size:15.4px;line-height:15.4px;color:#0a2a4a;transform:scaleX(0.8664);transform-origin:0 0;-webkit-text-stroke:0.08px;">REC006</div>
<div class="t" style="left:648.80px;top:272.86px;font-size:15.4px;line-height:15.4px;color:#0a2a4a;transform:scaleX(0.8757);transform-origin:0 0;-webkit-text-stroke:0.08px;">240700001</div>
<div class="t" style="left:740.20px;top:272.86px;font-size:15.4px;line-height:15.4px;color:#0a2a4a;transform:scaleX(0.8757);transform-origin:0 0;-webkit-text-stroke:0.08px;">001</div>
<div class="t" style="left:791.80px;top:272.86px;font-size:15.4px;line-height:15.4px;color:#0a2a4a;transform:scaleX(0.8591);transform-origin:0 0;-webkit-text-stroke:0.08px;">R</div>
<div class="t" style="left:823.00px;top:272.86px;font-size:15.4px;line-height:15.4px;color:#0a2a4a;transform:scaleX(0.8729);transform-origin:0 0;-webkit-text-stroke:0.08px;">065001B</div>
<div class="t" style="left:954.20px;top:272.86px;font-size:15.4px;line-height:15.4px;color:#0a2a4a;transform:scaleX(0.8628);transform-origin:0 0;-webkit-text-stroke:0.08px;">Joue 28 profil talon 95 sans patte dodécagone 4viS</div>
<div class="t" style="left:1301.10px;top:272.86px;font-size:15.4px;line-height:15.4px;color:#0a2a4a;transform:scaleX(0.8892);transform-origin:0 0;-webkit-text-stroke:0.08px;">500,000</div>
<div class="t" style="left:1390.40px;top:272.86px;font-size:15.4px;line-height:15.4px;color:#0a2a4a;transform:scaleX(0.8917);transform-origin:0 0;-webkit-text-stroke:0.08px;">19,000</div>
<div class="t" style="left:1438.20px;top:272.86px;font-size:15.4px;line-height:15.4px;color:#0a2a4a;transform:scaleX(0.8591);transform-origin:0 0;-webkit-text-stroke:0.08px;">Un</div>
<svg class="b" style="left:1517.6px;top:272.4px;" width="16.4" height="16.8" viewBox="0 0 16.400 16.800"><rect x="0.8" y="0.8" width="14.800" height="15.200" rx="1.200" fill="none" stroke="#47708f" stroke-width="1.600"/></svg>
<div class="t" style="left:1571.50px;top:272.86px;font-size:15.4px;line-height:15.4px;color:#0a2a4a;transform:scaleX(0.8952);transform-origin:0 0;-webkit-text-stroke:0.08px;">0,100</div>
<div class="t" style="left:1672.60px;top:272.86px;font-size:15.4px;line-height:15.4px;color:#0a2a4a;transform:scaleX(0.8952);transform-origin:0 0;-webkit-text-stroke:0.08px;">0,000</div>
<div class="t" style="left:1791.10px;top:272.86px;font-size:15.4px;line-height:15.4px;color:#0a2a4a;transform:scaleX(0.9008);transform-origin:0 0;-webkit-text-stroke:0.08px;">0,00</div>
<div class="t" style="left:1823.90px;top:272.86px;font-size:15.4px;line-height:15.4px;color:#0a2a4a;transform:scaleX(0.8591);transform-origin:0 0;-webkit-text-stroke:0.08px;">STIC</div>
<div class="b" style="left:463.6px;top:291.2px;width:1453.6999999999998px;height:19px;background:#efefef;"></div>
<div class="t" style="left:472.75px;top:292.86px;font-size:15.4px;line-height:15.4px;color:#000;transform:scaleX(0.9393);transform-origin:0 0;-webkit-text-stroke:0.08px;">04/07/2024</div>
<div class="t" style="left:557.50px;top:292.86px;font-size:15.4px;line-height:15.4px;color:#000;transform:scaleX(0.8664);transform-origin:0 0;-webkit-text-stroke:0.08px;">REC007</div>
<div class="t" style="left:648.80px;top:292.86px;font-size:15.4px;line-height:15.4px;color:#000;transform:scaleX(0.8757);transform-origin:0 0;-webkit-text-stroke:0.08px;">240700001</div>
<div class="t" style="left:740.20px;top:292.86px;font-size:15.4px;line-height:15.4px;color:#000;transform:scaleX(0.8757);transform-origin:0 0;-webkit-text-stroke:0.08px;">001</div>
<div class="t" style="left:791.80px;top:292.86px;font-size:15.4px;line-height:15.4px;color:#000;transform:scaleX(0.8591);transform-origin:0 0;-webkit-text-stroke:0.08px;">R</div>
<div class="t" style="left:823.00px;top:292.86px;font-size:15.4px;line-height:15.4px;color:#000;transform:scaleX(0.8729);transform-origin:0 0;-webkit-text-stroke:0.08px;">065001B</div>
<div class="t" style="left:954.20px;top:292.86px;font-size:15.4px;line-height:15.4px;color:#000;transform:scaleX(0.8628);transform-origin:0 0;-webkit-text-stroke:0.08px;">Joue 28 profil talon 95 sans patte dodécagone 4viS</div>
<div class="t" style="left:1301.10px;top:292.86px;font-size:15.4px;line-height:15.4px;color:#000;transform:scaleX(0.8892);transform-origin:0 0;-webkit-text-stroke:0.08px;">500,000</div>
<div class="t" style="left:1390.40px;top:292.86px;font-size:15.4px;line-height:15.4px;color:#000;transform:scaleX(0.8917);transform-origin:0 0;-webkit-text-stroke:0.08px;">50,000</div>
<div class="t" style="left:1438.20px;top:292.86px;font-size:15.4px;line-height:15.4px;color:#000;transform:scaleX(0.8591);transform-origin:0 0;-webkit-text-stroke:0.08px;">Un</div>
<svg class="b" style="left:1517.6px;top:292.4px;" width="16.4" height="16.8" viewBox="0 0 16.400 16.800"><rect x="0.8" y="0.8" width="14.800" height="15.200" rx="1.200" fill="#fff" stroke="#6a6a6a" stroke-width="1.600"/></svg>
<svg class="b" style="left:1519.8px;top:294.59999999999997px;" width="12" height="12" viewBox="0 0 12 12"><path d="M0.6 5.700 L4.200 9.400 L11.200 1.800" stroke="#606060" stroke-width="1.700" fill="none"/></svg>
<div class="t" style="left:1571.50px;top:292.86px;font-size:15.4px;line-height:15.4px;color:#000;transform:scaleX(0.8952);transform-origin:0 0;-webkit-text-stroke:0.08px;">0,100</div>
<div class="t" style="left:1672.60px;top:292.86px;font-size:15.4px;line-height:15.4px;color:#000;transform:scaleX(0.8952);transform-origin:0 0;-webkit-text-stroke:0.08px;">0,000</div>
<div class="t" style="left:1791.10px;top:292.86px;font-size:15.4px;line-height:15.4px;color:#000;transform:scaleX(0.9008);transform-origin:0 0;-webkit-text-stroke:0.08px;">0,00</div>
<div class="t" style="left:1823.90px;top:292.86px;font-size:15.4px;line-height:15.4px;color:#000;transform:scaleX(0.8591);transform-origin:0 0;-webkit-text-stroke:0.08px;">STIC</div>
<div class="b" style="left:463.6px;top:311.2px;width:1453.6999999999998px;height:19px;background:#ffffff;"></div>
<div class="t" style="left:472.75px;top:312.86px;font-size:15.4px;line-height:15.4px;color:#000;transform:scaleX(0.9393);transform-origin:0 0;-webkit-text-stroke:0.08px;">04/07/2024</div>
<div class="t" style="left:557.50px;top:312.86px;font-size:15.4px;line-height:15.4px;color:#000;transform:scaleX(0.8664);transform-origin:0 0;-webkit-text-stroke:0.08px;">REC008</div>
<div class="t" style="left:648.80px;top:312.86px;font-size:15.4px;line-height:15.4px;color:#000;transform:scaleX(0.8757);transform-origin:0 0;-webkit-text-stroke:0.08px;">240700001</div>
<div class="t" style="left:740.20px;top:312.86px;font-size:15.4px;line-height:15.4px;color:#000;transform:scaleX(0.8757);transform-origin:0 0;-webkit-text-stroke:0.08px;">001</div>
<div class="t" style="left:791.80px;top:312.86px;font-size:15.4px;line-height:15.4px;color:#000;transform:scaleX(0.8591);transform-origin:0 0;-webkit-text-stroke:0.08px;">R</div>
<div class="t" style="left:823.00px;top:312.86px;font-size:15.4px;line-height:15.4px;color:#000;transform:scaleX(0.8729);transform-origin:0 0;-webkit-text-stroke:0.08px;">065001B</div>
<div class="t" style="left:954.20px;top:312.86px;font-size:15.4px;line-height:15.4px;color:#000;transform:scaleX(0.8628);transform-origin:0 0;-webkit-text-stroke:0.08px;">Joue 28 profil talon 95 sans patte dodécagone 4viS</div>
<div class="t" style="left:1301.10px;top:312.86px;font-size:15.4px;line-height:15.4px;color:#000;transform:scaleX(0.8892);transform-origin:0 0;-webkit-text-stroke:0.08px;">500,000</div>
<div class="t" style="left:1390.40px;top:312.86px;font-size:15.4px;line-height:15.4px;color:#000;transform:scaleX(0.8917);transform-origin:0 0;-webkit-text-stroke:0.08px;">15,000</div>
<div class="t" style="left:1438.20px;top:312.86px;font-size:15.4px;line-height:15.4px;color:#000;transform:scaleX(0.8591);transform-origin:0 0;-webkit-text-stroke:0.08px;">Un</div>
<svg class="b" style="left:1517.6px;top:312.4px;" width="16.4" height="16.8" viewBox="0 0 16.400 16.800"><rect x="0.8" y="0.8" width="14.800" height="15.200" rx="1.200" fill="#fff" stroke="#6a6a6a" stroke-width="1.600"/></svg>
<div class="t" style="left:1571.50px;top:312.86px;font-size:15.4px;line-height:15.4px;color:#000;transform:scaleX(0.8952);transform-origin:0 0;-webkit-text-stroke:0.08px;">0,100</div>
<div class="t" style="left:1672.60px;top:312.86px;font-size:15.4px;line-height:15.4px;color:#000;transform:scaleX(0.8952);transform-origin:0 0;-webkit-text-stroke:0.08px;">0,000</div>
<div class="t" style="left:1791.10px;top:312.86px;font-size:15.4px;line-height:15.4px;color:#000;transform:scaleX(0.9008);transform-origin:0 0;-webkit-text-stroke:0.08px;">0,00</div>
<div class="t" style="left:1823.90px;top:312.86px;font-size:15.4px;line-height:15.4px;color:#000;transform:scaleX(0.8591);transform-origin:0 0;-webkit-text-stroke:0.08px;">STIC</div>
<div class="b" style="left:463.6px;top:331.2px;width:1453.6999999999998px;height:19px;background:#efefef;"></div>
<div class="t" style="left:472.75px;top:332.86px;font-size:15.4px;line-height:15.4px;color:#000;transform:scaleX(0.9393);transform-origin:0 0;-webkit-text-stroke:0.08px;">04/07/2024</div>
<div class="t" style="left:557.50px;top:332.86px;font-size:15.4px;line-height:15.4px;color:#000;transform:scaleX(0.8664);transform-origin:0 0;-webkit-text-stroke:0.08px;">REC009</div>
<div class="t" style="left:648.80px;top:332.86px;font-size:15.4px;line-height:15.4px;color:#000;transform:scaleX(0.8757);transform-origin:0 0;-webkit-text-stroke:0.08px;">240700001</div>
<div class="t" style="left:740.20px;top:332.86px;font-size:15.4px;line-height:15.4px;color:#000;transform:scaleX(0.8757);transform-origin:0 0;-webkit-text-stroke:0.08px;">001</div>
<div class="t" style="left:791.80px;top:332.86px;font-size:15.4px;line-height:15.4px;color:#000;transform:scaleX(0.8591);transform-origin:0 0;-webkit-text-stroke:0.08px;">R</div>
<div class="t" style="left:823.00px;top:332.86px;font-size:15.4px;line-height:15.4px;color:#000;transform:scaleX(0.8729);transform-origin:0 0;-webkit-text-stroke:0.08px;">065001B</div>
<div class="t" style="left:954.20px;top:332.86px;font-size:15.4px;line-height:15.4px;color:#000;transform:scaleX(0.8628);transform-origin:0 0;-webkit-text-stroke:0.08px;">Joue 28 profil talon 95 sans patte dodécagone 4viS</div>
<div class="t" style="left:1301.10px;top:332.86px;font-size:15.4px;line-height:15.4px;color:#000;transform:scaleX(0.8892);transform-origin:0 0;-webkit-text-stroke:0.08px;">500,000</div>
<div class="t" style="left:1390.40px;top:332.86px;font-size:15.4px;line-height:15.4px;color:#000;transform:scaleX(0.8917);transform-origin:0 0;-webkit-text-stroke:0.08px;">50,000</div>
<div class="t" style="left:1438.20px;top:332.86px;font-size:15.4px;line-height:15.4px;color:#000;transform:scaleX(0.8591);transform-origin:0 0;-webkit-text-stroke:0.08px;">Un</div>
<svg class="b" style="left:1517.6px;top:332.4px;" width="16.4" height="16.8" viewBox="0 0 16.400 16.800"><rect x="0.8" y="0.8" width="14.800" height="15.200" rx="1.200" fill="#fff" stroke="#6a6a6a" stroke-width="1.600"/></svg>
<svg class="b" style="left:1519.8px;top:334.59999999999997px;" width="12" height="12" viewBox="0 0 12 12"><path d="M0.6 5.700 L4.200 9.400 L11.200 1.800" stroke="#606060" stroke-width="1.700" fill="none"/></svg>
<div class="t" style="left:1571.50px;top:332.86px;font-size:15.4px;line-height:15.4px;color:#000;transform:scaleX(0.8952);transform-origin:0 0;-webkit-text-stroke:0.08px;">0,100</div>
<div class="t" style="left:1672.60px;top:332.86px;font-size:15.4px;line-height:15.4px;color:#000;transform:scaleX(0.8952);transform-origin:0 0;-webkit-text-stroke:0.08px;">0,000</div>
<div class="t" style="left:1791.10px;top:332.86px;font-size:15.4px;line-height:15.4px;color:#000;transform:scaleX(0.9008);transform-origin:0 0;-webkit-text-stroke:0.08px;">0,00</div>
<div class="t" style="left:1823.90px;top:332.86px;font-size:15.4px;line-height:15.4px;color:#000;transform:scaleX(0.8591);transform-origin:0 0;-webkit-text-stroke:0.08px;">STIC</div>
<div class="b" style="left:463.6px;top:351.2px;width:1453.6999999999998px;height:19px;background:#ffffff;"></div>
<div class="t" style="left:472.75px;top:352.86px;font-size:15.4px;line-height:15.4px;color:#000;transform:scaleX(0.9393);transform-origin:0 0;-webkit-text-stroke:0.08px;">04/07/2024</div>
<div class="t" style="left:557.50px;top:352.86px;font-size:15.4px;line-height:15.4px;color:#000;transform:scaleX(0.8664);transform-origin:0 0;-webkit-text-stroke:0.08px;">REC010</div>
<div class="t" style="left:648.80px;top:352.86px;font-size:15.4px;line-height:15.4px;color:#000;transform:scaleX(0.8757);transform-origin:0 0;-webkit-text-stroke:0.08px;">240700001</div>
<div class="t" style="left:740.20px;top:352.86px;font-size:15.4px;line-height:15.4px;color:#000;transform:scaleX(0.8757);transform-origin:0 0;-webkit-text-stroke:0.08px;">001</div>
<div class="t" style="left:791.80px;top:352.86px;font-size:15.4px;line-height:15.4px;color:#000;transform:scaleX(0.8591);transform-origin:0 0;-webkit-text-stroke:0.08px;">R</div>
<div class="t" style="left:823.00px;top:352.86px;font-size:15.4px;line-height:15.4px;color:#000;transform:scaleX(0.8729);transform-origin:0 0;-webkit-text-stroke:0.08px;">065001B</div>
<div class="t" style="left:954.20px;top:352.86px;font-size:15.4px;line-height:15.4px;color:#000;transform:scaleX(0.8628);transform-origin:0 0;-webkit-text-stroke:0.08px;">Joue 28 profil talon 95 sans patte dodécagone 4viS</div>
<div class="t" style="left:1301.10px;top:352.86px;font-size:15.4px;line-height:15.4px;color:#000;transform:scaleX(0.8892);transform-origin:0 0;-webkit-text-stroke:0.08px;">500,000</div>
<div class="t" style="left:1382.90px;top:352.86px;font-size:15.4px;line-height:15.4px;color:#000;transform:scaleX(0.8892);transform-origin:0 0;-webkit-text-stroke:0.08px;">100,000</div>
<div class="t" style="left:1438.20px;top:352.86px;font-size:15.4px;line-height:15.4px;color:#000;transform:scaleX(0.8591);transform-origin:0 0;-webkit-text-stroke:0.08px;">Un</div>
<svg class="b" style="left:1517.6px;top:352.4px;" width="16.4" height="16.8" viewBox="0 0 16.400 16.800"><rect x="0.8" y="0.8" width="14.800" height="15.200" rx="1.200" fill="#fff" stroke="#6a6a6a" stroke-width="1.600"/></svg>
<div class="t" style="left:1571.50px;top:352.86px;font-size:15.4px;line-height:15.4px;color:#000;transform:scaleX(0.8952);transform-origin:0 0;-webkit-text-stroke:0.08px;">0,100</div>
<div class="t" style="left:1672.60px;top:352.86px;font-size:15.4px;line-height:15.4px;color:#000;transform:scaleX(0.8952);transform-origin:0 0;-webkit-text-stroke:0.08px;">0,000</div>
<div class="t" style="left:1791.10px;top:352.86px;font-size:15.4px;line-height:15.4px;color:#000;transform:scaleX(0.9008);transform-origin:0 0;-webkit-text-stroke:0.08px;">0,00</div>
<div class="t" style="left:1823.90px;top:352.86px;font-size:15.4px;line-height:15.4px;color:#000;transform:scaleX(0.8591);transform-origin:0 0;-webkit-text-stroke:0.08px;">STIC</div>
<div class="b" style="left:463.6px;top:371.2px;width:1453.6999999999998px;height:19px;background:#efefef;"></div>
<div class="t" style="left:472.75px;top:372.86px;font-size:15.4px;line-height:15.4px;color:#000;transform:scaleX(0.9393);transform-origin:0 0;-webkit-text-stroke:0.08px;">03/07/2024</div>
<div class="t" style="left:557.50px;top:372.86px;font-size:15.4px;line-height:15.4px;color:#000;transform:scaleX(0.8733);transform-origin:0 0;-webkit-text-stroke:0.08px;">R24070001</div>
<div class="t" style="left:648.80px;top:372.86px;font-size:15.4px;line-height:15.4px;color:#000;transform:scaleX(0.8733);transform-origin:0 0;-webkit-text-stroke:0.08px;">R24070001</div>
<div class="t" style="left:740.20px;top:372.86px;font-size:15.4px;line-height:15.4px;color:#000;transform:scaleX(0.8757);transform-origin:0 0;-webkit-text-stroke:0.08px;">001</div>
<div class="t" style="left:791.80px;top:372.86px;font-size:15.4px;line-height:15.4px;color:#000;transform:scaleX(0.8591);transform-origin:0 0;-webkit-text-stroke:0.08px;">R</div>
<div class="t" style="left:823.00px;top:372.86px;font-size:15.4px;line-height:15.4px;color:#000;transform:scaleX(0.8729);transform-origin:0 0;-webkit-text-stroke:0.08px;">065001B</div>
<div class="t" style="left:954.20px;top:372.86px;font-size:15.4px;line-height:15.4px;color:#000;transform:scaleX(0.8628);transform-origin:0 0;-webkit-text-stroke:0.08px;">Joue 28 profil talon 95 sans patte dodécagone 4viS</div>
<div class="t" style="left:1316.10px;top:372.86px;font-size:15.4px;line-height:15.4px;color:#000;transform:scaleX(0.8952);transform-origin:0 0;-webkit-text-stroke:0.08px;">0,000</div>
<div class="t" style="left:1385.80px;top:372.86px;font-size:15.4px;line-height:15.4px;color:#000;transform:scaleX(0.8922);transform-origin:0 0;-webkit-text-stroke:0.08px;">-50,000</div>
<div class="t" style="left:1438.20px;top:372.86px;font-size:15.4px;line-height:15.4px;color:#000;transform:scaleX(0.8591);transform-origin:0 0;-webkit-text-stroke:0.08px;">Un</div>
<svg class="b" style="left:1517.6px;top:372.4px;" width="16.4" height="16.8" viewBox="0 0 16.400 16.800"><rect x="0.8" y="0.8" width="14.800" height="15.200" rx="1.200" fill="#fff" stroke="#6a6a6a" stroke-width="1.600"/></svg>
<div class="t" style="left:1571.50px;top:372.86px;font-size:15.4px;line-height:15.4px;color:#000;transform:scaleX(0.8952);transform-origin:0 0;-webkit-text-stroke:0.08px;">0,100</div>
<div class="t" style="left:1672.60px;top:372.86px;font-size:15.4px;line-height:15.4px;color:#000;transform:scaleX(0.8952);transform-origin:0 0;-webkit-text-stroke:0.08px;">0,000</div>
<div class="t" style="left:1791.10px;top:372.86px;font-size:15.4px;line-height:15.4px;color:#000;transform:scaleX(0.9008);transform-origin:0 0;-webkit-text-stroke:0.08px;">0,00</div>
<div class="t" style="left:1823.90px;top:372.86px;font-size:15.4px;line-height:15.4px;color:#000;transform:scaleX(0.8591);transform-origin:0 0;-webkit-text-stroke:0.08px;">STIC</div>
<div class="b" style="left:463.6px;top:391.2px;width:1453.6999999999998px;height:19px;background:#ffffff;"></div>
<div class="t" style="left:472.75px;top:392.86px;font-size:15.4px;line-height:15.4px;color:#000;transform:scaleX(0.9393);transform-origin:0 0;-webkit-text-stroke:0.08px;">03/07/2024</div>
<div class="t" style="left:557.50px;top:392.86px;font-size:15.4px;line-height:15.4px;color:#000;transform:scaleX(0.8733);transform-origin:0 0;-webkit-text-stroke:0.08px;">R24070001</div>
<div class="t" style="left:648.80px;top:392.86px;font-size:15.4px;line-height:15.4px;color:#000;transform:scaleX(0.8733);transform-origin:0 0;-webkit-text-stroke:0.08px;">R24070001</div>
<div class="t" style="left:740.20px;top:392.86px;font-size:15.4px;line-height:15.4px;color:#000;transform:scaleX(0.8757);transform-origin:0 0;-webkit-text-stroke:0.08px;">002</div>
<div class="t" style="left:791.80px;top:392.86px;font-size:15.4px;line-height:15.4px;color:#000;transform:scaleX(0.8591);transform-origin:0 0;-webkit-text-stroke:0.08px;">R</div>
<div class="t" style="left:823.00px;top:392.86px;font-size:15.4px;line-height:15.4px;color:#000;transform:scaleX(0.8729);transform-origin:0 0;-webkit-text-stroke:0.08px;">065001B</div>
<div class="t" style="left:954.20px;top:392.86px;font-size:15.4px;line-height:15.4px;color:#000;transform:scaleX(0.8628);transform-origin:0 0;-webkit-text-stroke:0.08px;">Joue 28 profil talon 95 sans patte dodécagone 4viS</div>
<div class="t" style="left:1316.10px;top:392.86px;font-size:15.4px;line-height:15.4px;color:#000;transform:scaleX(0.8952);transform-origin:0 0;-webkit-text-stroke:0.08px;">0,000</div>
<div class="t" style="left:1385.80px;top:392.86px;font-size:15.4px;line-height:15.4px;color:#000;transform:scaleX(0.8922);transform-origin:0 0;-webkit-text-stroke:0.08px;">-50,000</div>
<div class="t" style="left:1438.20px;top:392.86px;font-size:15.4px;line-height:15.4px;color:#000;transform:scaleX(0.8591);transform-origin:0 0;-webkit-text-stroke:0.08px;">Un</div>
<svg class="b" style="left:1517.6px;top:392.4px;" width="16.4" height="16.8" viewBox="0 0 16.400 16.800"><rect x="0.8" y="0.8" width="14.800" height="15.200" rx="1.200" fill="#fff" stroke="#6a6a6a" stroke-width="1.600"/></svg>
<div class="t" style="left:1571.50px;top:392.86px;font-size:15.4px;line-height:15.4px;color:#000;transform:scaleX(0.8952);transform-origin:0 0;-webkit-text-stroke:0.08px;">0,100</div>
<div class="t" style="left:1672.60px;top:392.86px;font-size:15.4px;line-height:15.4px;color:#000;transform:scaleX(0.8952);transform-origin:0 0;-webkit-text-stroke:0.08px;">0,000</div>
<div class="t" style="left:1791.10px;top:392.86px;font-size:15.4px;line-height:15.4px;color:#000;transform:scaleX(0.9008);transform-origin:0 0;-webkit-text-stroke:0.08px;">0,00</div>
<div class="t" style="left:1823.90px;top:392.86px;font-size:15.4px;line-height:15.4px;color:#000;transform:scaleX(0.8591);transform-origin:0 0;-webkit-text-stroke:0.08px;">STIC</div>
<div class="b" style="left:463.6px;top:411.2px;width:1453.6999999999998px;height:19px;background:#efefef;"></div>
<div class="t" style="left:472.75px;top:412.86px;font-size:15.4px;line-height:15.4px;color:#000;transform:scaleX(0.9393);transform-origin:0 0;-webkit-text-stroke:0.08px;">03/07/2024</div>
<div class="t" style="left:557.50px;top:412.86px;font-size:15.4px;line-height:15.4px;color:#000;transform:scaleX(0.8733);transform-origin:0 0;-webkit-text-stroke:0.08px;">R24070001</div>
<div class="t" style="left:648.80px;top:412.86px;font-size:15.4px;line-height:15.4px;color:#000;transform:scaleX(0.8733);transform-origin:0 0;-webkit-text-stroke:0.08px;">R24070001</div>
<div class="t" style="left:740.20px;top:412.86px;font-size:15.4px;line-height:15.4px;color:#000;transform:scaleX(0.8757);transform-origin:0 0;-webkit-text-stroke:0.08px;">003</div>
<div class="t" style="left:791.80px;top:412.86px;font-size:15.4px;line-height:15.4px;color:#000;transform:scaleX(0.8591);transform-origin:0 0;-webkit-text-stroke:0.08px;">R</div>
<div class="t" style="left:823.00px;top:412.86px;font-size:15.4px;line-height:15.4px;color:#000;transform:scaleX(0.8757);transform-origin:0 0;-webkit-text-stroke:0.08px;">1010144</div>
<div class="t" style="left:954.20px;top:412.86px;font-size:15.4px;line-height:15.4px;color:#000;transform:scaleX(0.8623);transform-origin:0 0;-webkit-text-stroke:0.08px;">Jonction simple de 14 mm</div>
<div class="t" style="left:1316.10px;top:412.86px;font-size:15.4px;line-height:15.4px;color:#000;transform:scaleX(0.8952);transform-origin:0 0;-webkit-text-stroke:0.08px;">0,000</div>
<div class="t" style="left:1385.80px;top:412.86px;font-size:15.4px;line-height:15.4px;color:#000;transform:scaleX(0.8922);transform-origin:0 0;-webkit-text-stroke:0.08px;">-10,000</div>
<div class="t" style="left:1438.20px;top:412.86px;font-size:15.4px;line-height:15.4px;color:#000;transform:scaleX(0.8666);transform-origin:0 0;-webkit-text-stroke:0.08px;">B6</div>
<svg class="b" style="left:1517.6px;top:412.4px;" width="16.4" height="16.8" viewBox="0 0 16.400 16.800"><rect x="0.8" y="0.8" width="14.800" height="15.200" rx="1.200" fill="#fff" stroke="#6a6a6a" stroke-width="1.600"/></svg>
<div class="t" style="left:1571.50px;top:412.86px;font-size:15.4px;line-height:15.4px;color:#000;transform:scaleX(0.8952);transform-origin:0 0;-webkit-text-stroke:0.08px;">5,000</div>
<div class="t" style="left:1672.60px;top:412.86px;font-size:15.4px;line-height:15.4px;color:#000;transform:scaleX(0.8952);transform-origin:0 0;-webkit-text-stroke:0.08px;">0,000</div>
<div class="t" style="left:1791.10px;top:412.86px;font-size:15.4px;line-height:15.4px;color:#000;transform:scaleX(0.9008);transform-origin:0 0;-webkit-text-stroke:0.08px;">0,00</div>
<div class="t" style="left:1823.90px;top:412.86px;font-size:15.4px;line-height:15.4px;color:#000;transform:scaleX(0.8591);transform-origin:0 0;-webkit-text-stroke:0.08px;">STIC</div>
<div class="b" style="left:463.6px;top:431.2px;width:1453.6999999999998px;height:19px;background:#ffffff;"></div>
<div class="t" style="left:472.75px;top:432.86px;font-size:15.4px;line-height:15.4px;color:#000;transform:scaleX(0.9393);transform-origin:0 0;-webkit-text-stroke:0.08px;">03/07/2024</div>
<div class="t" style="left:557.50px;top:432.86px;font-size:15.4px;line-height:15.4px;color:#000;transform:scaleX(0.8664);transform-origin:0 0;-webkit-text-stroke:0.08px;">REC001</div>
<div class="t" style="left:648.80px;top:432.86px;font-size:15.4px;line-height:15.4px;color:#000;transform:scaleX(0.8757);transform-origin:0 0;-webkit-text-stroke:0.08px;">240700001</div>
<div class="t" style="left:740.20px;top:432.86px;font-size:15.4px;line-height:15.4px;color:#000;transform:scaleX(0.8757);transform-origin:0 0;-webkit-text-stroke:0.08px;">001</div>
<div class="t" style="left:791.80px;top:432.86px;font-size:15.4px;line-height:15.4px;color:#000;transform:scaleX(0.8591);transform-origin:0 0;-webkit-text-stroke:0.08px;">R</div>
<div class="t" style="left:823.00px;top:432.86px;font-size:15.4px;line-height:15.4px;color:#000;transform:scaleX(0.8729);transform-origin:0 0;-webkit-text-stroke:0.08px;">065001B</div>
<div class="t" style="left:954.20px;top:432.86px;font-size:15.4px;line-height:15.4px;color:#000;transform:scaleX(0.8628);transform-origin:0 0;-webkit-text-stroke:0.08px;">Joue 28 profil talon 95 sans patte dodécagone 4viS</div>
<div class="t" style="left:1301.10px;top:432.86px;font-size:15.4px;line-height:15.4px;color:#000;transform:scaleX(0.8892);transform-origin:0 0;-webkit-text-stroke:0.08px;">500,000</div>
<div class="t" style="left:1390.40px;top:432.86px;font-size:15.4px;line-height:15.4px;color:#000;transform:scaleX(0.8917);transform-origin:0 0;-webkit-text-stroke:0.08px;">50,000</div>
<div class="t" style="left:1438.20px;top:432.86px;font-size:15.4px;line-height:15.4px;color:#000;transform:scaleX(0.8591);transform-origin:0 0;-webkit-text-stroke:0.08px;">Un</div>
<svg class="b" style="left:1517.6px;top:432.4px;" width="16.4" height="16.8" viewBox="0 0 16.400 16.800"><rect x="0.8" y="0.8" width="14.800" height="15.200" rx="1.200" fill="#fff" stroke="#6a6a6a" stroke-width="1.600"/></svg>
<svg class="b" style="left:1519.8px;top:434.59999999999997px;" width="12" height="12" viewBox="0 0 12 12"><path d="M0.6 5.700 L4.200 9.400 L11.200 1.800" stroke="#606060" stroke-width="1.700" fill="none"/></svg>
<div class="t" style="left:1571.50px;top:432.86px;font-size:15.4px;line-height:15.4px;color:#000;transform:scaleX(0.8952);transform-origin:0 0;-webkit-text-stroke:0.08px;">0,100</div>
<div class="t" style="left:1672.60px;top:432.86px;font-size:15.4px;line-height:15.4px;color:#000;transform:scaleX(0.8952);transform-origin:0 0;-webkit-text-stroke:0.08px;">0,000</div>
<div class="t" style="left:1791.10px;top:432.86px;font-size:15.4px;line-height:15.4px;color:#000;transform:scaleX(0.9008);transform-origin:0 0;-webkit-text-stroke:0.08px;">0,00</div>
<div class="t" style="left:1823.90px;top:432.86px;font-size:15.4px;line-height:15.4px;color:#000;transform:scaleX(0.8591);transform-origin:0 0;-webkit-text-stroke:0.08px;">STIC</div>
<div class="b" style="left:463.6px;top:451.2px;width:1453.6999999999998px;height:19px;background:#efefef;"></div>
<div class="t" style="left:472.75px;top:452.86px;font-size:15.4px;line-height:15.4px;color:#000;transform:scaleX(0.9393);transform-origin:0 0;-webkit-text-stroke:0.08px;">03/07/2024</div>
<div class="t" style="left:557.50px;top:452.86px;font-size:15.4px;line-height:15.4px;color:#000;transform:scaleX(0.8664);transform-origin:0 0;-webkit-text-stroke:0.08px;">REC002</div>
<div class="t" style="left:648.80px;top:452.86px;font-size:15.4px;line-height:15.4px;color:#000;transform:scaleX(0.8757);transform-origin:0 0;-webkit-text-stroke:0.08px;">240700001</div>
<div class="t" style="left:740.20px;top:452.86px;font-size:15.4px;line-height:15.4px;color:#000;transform:scaleX(0.8757);transform-origin:0 0;-webkit-text-stroke:0.08px;">001</div>
<div class="t" style="left:791.80px;top:452.86px;font-size:15.4px;line-height:15.4px;color:#000;transform:scaleX(0.8591);transform-origin:0 0;-webkit-text-stroke:0.08px;">R</div>
<div class="t" style="left:823.00px;top:452.86px;font-size:15.4px;line-height:15.4px;color:#000;transform:scaleX(0.8729);transform-origin:0 0;-webkit-text-stroke:0.08px;">065001B</div>
<div class="t" style="left:954.20px;top:452.86px;font-size:15.4px;line-height:15.4px;color:#000;transform:scaleX(0.8628);transform-origin:0 0;-webkit-text-stroke:0.08px;">Joue 28 profil talon 95 sans patte dodécagone 4viS</div>
<div class="t" style="left:1301.10px;top:452.86px;font-size:15.4px;line-height:15.4px;color:#000;transform:scaleX(0.8892);transform-origin:0 0;-webkit-text-stroke:0.08px;">500,000</div>
<div class="t" style="left:1390.40px;top:452.86px;font-size:15.4px;line-height:15.4px;color:#000;transform:scaleX(0.8917);transform-origin:0 0;-webkit-text-stroke:0.08px;">50,000</div>
<div class="t" style="left:1438.20px;top:452.86px;font-size:15.4px;line-height:15.4px;color:#000;transform:scaleX(0.8591);transform-origin:0 0;-webkit-text-stroke:0.08px;">Un</div>
<svg class="b" style="left:1517.6px;top:452.4px;" width="16.4" height="16.8" viewBox="0 0 16.400 16.800"><rect x="0.8" y="0.8" width="14.800" height="15.200" rx="1.200" fill="#fff" stroke="#6a6a6a" stroke-width="1.600"/></svg>
<svg class="b" style="left:1519.8px;top:454.59999999999997px;" width="12" height="12" viewBox="0 0 12 12"><path d="M0.6 5.700 L4.200 9.400 L11.200 1.800" stroke="#606060" stroke-width="1.700" fill="none"/></svg>
<div class="t" style="left:1571.50px;top:452.86px;font-size:15.4px;line-height:15.4px;color:#000;transform:scaleX(0.8952);transform-origin:0 0;-webkit-text-stroke:0.08px;">0,100</div>
<div class="t" style="left:1672.60px;top:452.86px;font-size:15.4px;line-height:15.4px;color:#000;transform:scaleX(0.8952);transform-origin:0 0;-webkit-text-stroke:0.08px;">0,000</div>
<div class="t" style="left:1791.10px;top:452.86px;font-size:15.4px;line-height:15.4px;color:#000;transform:scaleX(0.9008);transform-origin:0 0;-webkit-text-stroke:0.08px;">0,00</div>
<div class="t" style="left:1823.90px;top:452.86px;font-size:15.4px;line-height:15.4px;color:#000;transform:scaleX(0.8591);transform-origin:0 0;-webkit-text-stroke:0.08px;">STIC</div>
<div class="b" style="left:463.6px;top:471.2px;width:1453.6999999999998px;height:19px;background:#ffffff;"></div>
<div class="t" style="left:472.75px;top:472.86px;font-size:15.4px;line-height:15.4px;color:#000;transform:scaleX(0.9393);transform-origin:0 0;-webkit-text-stroke:0.08px;">03/07/2024</div>
<div class="t" style="left:557.50px;top:472.86px;font-size:15.4px;line-height:15.4px;color:#000;transform:scaleX(0.8664);transform-origin:0 0;-webkit-text-stroke:0.08px;">REC003</div>
<div class="t" style="left:648.80px;top:472.86px;font-size:15.4px;line-height:15.4px;color:#000;transform:scaleX(0.8757);transform-origin:0 0;-webkit-text-stroke:0.08px;">240700001</div>
<div class="t" style="left:740.20px;top:472.86px;font-size:15.4px;line-height:15.4px;color:#000;transform:scaleX(0.8757);transform-origin:0 0;-webkit-text-stroke:0.08px;">001</div>
<div class="t" style="left:791.80px;top:472.86px;font-size:15.4px;line-height:15.4px;color:#000;transform:scaleX(0.8591);transform-origin:0 0;-webkit-text-stroke:0.08px;">R</div>
<div class="t" style="left:823.00px;top:472.86px;font-size:15.4px;line-height:15.4px;color:#000;transform:scaleX(0.8729);transform-origin:0 0;-webkit-text-stroke:0.08px;">065001B</div>
<div class="t" style="left:954.20px;top:472.86px;font-size:15.4px;line-height:15.4px;color:#000;transform:scaleX(0.8628);transform-origin:0 0;-webkit-text-stroke:0.08px;">Joue 28 profil talon 95 sans patte dodécagone 4viS</div>
<div class="t" style="left:1301.10px;top:472.86px;font-size:15.4px;line-height:15.4px;color:#000;transform:scaleX(0.8892);transform-origin:0 0;-webkit-text-stroke:0.08px;">500,000</div>
<div class="t" style="left:1390.40px;top:472.86px;font-size:15.4px;line-height:15.4px;color:#000;transform:scaleX(0.8917);transform-origin:0 0;-webkit-text-stroke:0.08px;">50,000</div>
<div class="t" style="left:1438.20px;top:472.86px;font-size:15.4px;line-height:15.4px;color:#000;transform:scaleX(0.8591);transform-origin:0 0;-webkit-text-stroke:0.08px;">Un</div>
<svg class="b" style="left:1517.6px;top:472.4px;" width="16.4" height="16.8" viewBox="0 0 16.400 16.800"><rect x="0.8" y="0.8" width="14.800" height="15.200" rx="1.200" fill="#fff" stroke="#6a6a6a" stroke-width="1.600"/></svg>
<svg class="b" style="left:1519.8px;top:474.59999999999997px;" width="12" height="12" viewBox="0 0 12 12"><path d="M0.6 5.700 L4.200 9.400 L11.200 1.800" stroke="#606060" stroke-width="1.700" fill="none"/></svg>
<div class="t" style="left:1571.50px;top:472.86px;font-size:15.4px;line-height:15.4px;color:#000;transform:scaleX(0.8952);transform-origin:0 0;-webkit-text-stroke:0.08px;">0,100</div>
<div class="t" style="left:1672.60px;top:472.86px;font-size:15.4px;line-height:15.4px;color:#000;transform:scaleX(0.8952);transform-origin:0 0;-webkit-text-stroke:0.08px;">0,000</div>
<div class="t" style="left:1791.10px;top:472.86px;font-size:15.4px;line-height:15.4px;color:#000;transform:scaleX(0.9008);transform-origin:0 0;-webkit-text-stroke:0.08px;">0,00</div>
<div class="t" style="left:1823.90px;top:472.86px;font-size:15.4px;line-height:15.4px;color:#000;transform:scaleX(0.8591);transform-origin:0 0;-webkit-text-stroke:0.08px;">STIC</div>
<div class="b" style="left:463.6px;top:491.2px;width:1453.6999999999998px;height:19px;background:#efefef;"></div>
<div class="t" style="left:472.75px;top:492.86px;font-size:15.4px;line-height:15.4px;color:#000;transform:scaleX(0.9393);transform-origin:0 0;-webkit-text-stroke:0.08px;">03/07/2024</div>
<div class="t" style="left:557.50px;top:492.86px;font-size:15.4px;line-height:15.4px;color:#000;transform:scaleX(0.8664);transform-origin:0 0;-webkit-text-stroke:0.08px;">REC004</div>
<div class="t" style="left:648.80px;top:492.86px;font-size:15.4px;line-height:15.4px;color:#000;transform:scaleX(0.8757);transform-origin:0 0;-webkit-text-stroke:0.08px;">240700001</div>
<div class="t" style="left:740.20px;top:492.86px;font-size:15.4px;line-height:15.4px;color:#000;transform:scaleX(0.8757);transform-origin:0 0;-webkit-text-stroke:0.08px;">001</div>
<div class="t" style="left:791.80px;top:492.86px;font-size:15.4px;line-height:15.4px;color:#000;transform:scaleX(0.8591);transform-origin:0 0;-webkit-text-stroke:0.08px;">R</div>
<div class="t" style="left:823.00px;top:492.86px;font-size:15.4px;line-height:15.4px;color:#000;transform:scaleX(0.8729);transform-origin:0 0;-webkit-text-stroke:0.08px;">065001B</div>
<div class="t" style="left:954.20px;top:492.86px;font-size:15.4px;line-height:15.4px;color:#000;transform:scaleX(0.8628);transform-origin:0 0;-webkit-text-stroke:0.08px;">Joue 28 profil talon 95 sans patte dodécagone 4viS</div>
<div class="t" style="left:1301.10px;top:492.86px;font-size:15.4px;line-height:15.4px;color:#000;transform:scaleX(0.8892);transform-origin:0 0;-webkit-text-stroke:0.08px;">500,000</div>
<div class="t" style="left:1390.40px;top:492.86px;font-size:15.4px;line-height:15.4px;color:#000;transform:scaleX(0.8917);transform-origin:0 0;-webkit-text-stroke:0.08px;">80,000</div>
<div class="t" style="left:1438.20px;top:492.86px;font-size:15.4px;line-height:15.4px;color:#000;transform:scaleX(0.8591);transform-origin:0 0;-webkit-text-stroke:0.08px;">Un</div>
<svg class="b" style="left:1517.6px;top:492.4px;" width="16.4" height="16.8" viewBox="0 0 16.400 16.800"><rect x="0.8" y="0.8" width="14.800" height="15.200" rx="1.200" fill="#fff" stroke="#6a6a6a" stroke-width="1.600"/></svg>
<svg class="b" style="left:1519.8px;top:494.59999999999997px;" width="12" height="12" viewBox="0 0 12 12"><path d="M0.6 5.700 L4.200 9.400 L11.200 1.800" stroke="#606060" stroke-width="1.700" fill="none"/></svg>
<div class="t" style="left:1571.50px;top:492.86px;font-size:15.4px;line-height:15.4px;color:#000;transform:scaleX(0.8952);transform-origin:0 0;-webkit-text-stroke:0.08px;">0,100</div>
<div class="t" style="left:1672.60px;top:492.86px;font-size:15.4px;line-height:15.4px;color:#000;transform:scaleX(0.8952);transform-origin:0 0;-webkit-text-stroke:0.08px;">0,000</div>
<div class="t" style="left:1791.10px;top:492.86px;font-size:15.4px;line-height:15.4px;color:#000;transform:scaleX(0.9008);transform-origin:0 0;-webkit-text-stroke:0.08px;">0,00</div>
<div class="t" style="left:1823.90px;top:492.86px;font-size:15.4px;line-height:15.4px;color:#000;transform:scaleX(0.8591);transform-origin:0 0;-webkit-text-stroke:0.08px;">STIC</div>
<div class="b" style="left:463.6px;top:511.2px;width:1453.6999999999998px;height:19px;background:#ffffff;"></div>
<div class="t" style="left:472.75px;top:512.86px;font-size:15.4px;line-height:15.4px;color:#000;transform:scaleX(0.9393);transform-origin:0 0;-webkit-text-stroke:0.08px;">03/07/2024</div>
<div class="t" style="left:557.50px;top:512.86px;font-size:15.4px;line-height:15.4px;color:#000;transform:scaleX(0.8664);transform-origin:0 0;-webkit-text-stroke:0.08px;">REC005</div>
<div class="t" style="left:648.80px;top:512.86px;font-size:15.4px;line-height:15.4px;color:#000;transform:scaleX(0.8757);transform-origin:0 0;-webkit-text-stroke:0.08px;">240700001</div>
<div class="t" style="left:740.20px;top:512.86px;font-size:15.4px;line-height:15.4px;color:#000;transform:scaleX(0.8757);transform-origin:0 0;-webkit-text-stroke:0.08px;">001</div>
<div class="t" style="left:791.80px;top:512.86px;font-size:15.4px;line-height:15.4px;color:#000;transform:scaleX(0.8591);transform-origin:0 0;-webkit-text-stroke:0.08px;">R</div>
<div class="t" style="left:823.00px;top:512.86px;font-size:15.4px;line-height:15.4px;color:#000;transform:scaleX(0.8729);transform-origin:0 0;-webkit-text-stroke:0.08px;">065001B</div>
<div class="t" style="left:954.20px;top:512.86px;font-size:15.4px;line-height:15.4px;color:#000;transform:scaleX(0.8628);transform-origin:0 0;-webkit-text-stroke:0.08px;">Joue 28 profil talon 95 sans patte dodécagone 4viS</div>
<div class="t" style="left:1301.10px;top:512.86px;font-size:15.4px;line-height:15.4px;color:#000;transform:scaleX(0.8892);transform-origin:0 0;-webkit-text-stroke:0.08px;">500,000</div>
<div class="t" style="left:1390.40px;top:512.86px;font-size:15.4px;line-height:15.4px;color:#000;transform:scaleX(0.8917);transform-origin:0 0;-webkit-text-stroke:0.08px;">20,000</div>
<div class="t" style="left:1438.20px;top:512.86px;font-size:15.4px;line-height:15.4px;color:#000;transform:scaleX(0.8591);transform-origin:0 0;-webkit-text-stroke:0.08px;">Un</div>
<svg class="b" style="left:1517.6px;top:512.4px;" width="16.4" height="16.8" viewBox="0 0 16.400 16.800"><rect x="0.8" y="0.8" width="14.800" height="15.200" rx="1.200" fill="#fff" stroke="#6a6a6a" stroke-width="1.600"/></svg>
<svg class="b" style="left:1519.8px;top:514.6px;" width="12" height="12" viewBox="0 0 12 12"><path d="M0.6 5.700 L4.200 9.400 L11.200 1.800" stroke="#606060" stroke-width="1.700" fill="none"/></svg>
<div class="t" style="left:1571.50px;top:512.86px;font-size:15.4px;line-height:15.4px;color:#000;transform:scaleX(0.8952);transform-origin:0 0;-webkit-text-stroke:0.08px;">0,100</div>
<div class="t" style="left:1672.60px;top:512.86px;font-size:15.4px;line-height:15.4px;color:#000;transform:scaleX(0.8952);transform-origin:0 0;-webkit-text-stroke:0.08px;">0,000</div>
<div class="t" style="left:1791.10px;top:512.86px;font-size:15.4px;line-height:15.4px;color:#000;transform:scaleX(0.9008);transform-origin:0 0;-webkit-text-stroke:0.08px;">0,00</div>
<div class="t" style="left:1823.90px;top:512.86px;font-size:15.4px;line-height:15.4px;color:#000;transform:scaleX(0.8591);transform-origin:0 0;-webkit-text-stroke:0.08px;">STIC</div>
<div class="b" style="left:463.6px;top:531.2px;width:1453.6999999999998px;height:19px;background:#efefef;"></div>
<div class="t" style="left:472.75px;top:532.86px;font-size:15.4px;line-height:15.4px;color:#000;transform:scaleX(0.9393);transform-origin:0 0;-webkit-text-stroke:0.08px;">12/06/2024</div>
<div class="t" style="left:557.50px;top:532.86px;font-size:15.4px;line-height:15.4px;color:#000;transform:scaleX(0.8664);transform-origin:0 0;-webkit-text-stroke:0.08px;">REC001</div>
<div class="t" style="left:648.80px;top:532.86px;font-size:15.4px;line-height:15.4px;color:#000;transform:scaleX(0.8757);transform-origin:0 0;-webkit-text-stroke:0.08px;">240600002</div>
<div class="t" style="left:740.20px;top:532.86px;font-size:15.4px;line-height:15.4px;color:#000;transform:scaleX(0.8757);transform-origin:0 0;-webkit-text-stroke:0.08px;">001</div>
<div class="t" style="left:791.80px;top:532.86px;font-size:15.4px;line-height:15.4px;color:#000;transform:scaleX(0.8591);transform-origin:0 0;-webkit-text-stroke:0.08px;">R</div>
<div class="t" style="left:823.00px;top:532.86px;font-size:15.4px;line-height:15.4px;color:#000;transform:scaleX(0.8591);transform-origin:0 0;-webkit-text-stroke:0.08px;">Pose</div>
<div class="t" style="left:954.20px;top:532.86px;font-size:15.4px;line-height:15.4px;color:#000;transform:scaleX(0.8591);transform-origin:0 0;-webkit-text-stroke:0.08px;">Pose</div>
<div class="t" style="left:1316.10px;top:532.86px;font-size:15.4px;line-height:15.4px;color:#000;transform:scaleX(0.8952);transform-origin:0 0;-webkit-text-stroke:0.08px;">8,000</div>
<div class="t" style="left:1397.90px;top:532.86px;font-size:15.4px;line-height:15.4px;color:#000;transform:scaleX(0.8952);transform-origin:0 0;-webkit-text-stroke:0.08px;">8,000</div>
<div class="t" style="left:1438.20px;top:532.86px;font-size:15.4px;line-height:15.4px;color:#000;transform:scaleX(0.8591);transform-origin:0 0;-webkit-text-stroke:0.08px;">Un</div>
<svg class="b" style="left:1517.6px;top:532.4000000000001px;" width="16.4" height="16.8" viewBox="0 0 16.400 16.800"><rect x="0.8" y="0.8" width="14.800" height="15.200" rx="1.200" fill="#fff" stroke="#6a6a6a" stroke-width="1.600"/></svg>
<div class="t" style="left:1571.50px;top:532.86px;font-size:15.4px;line-height:15.4px;color:#000;transform:scaleX(0.8952);transform-origin:0 0;-webkit-text-stroke:0.08px;">0,000</div>
<div class="t" style="left:1672.60px;top:532.86px;font-size:15.4px;line-height:15.4px;color:#000;transform:scaleX(0.8952);transform-origin:0 0;-webkit-text-stroke:0.08px;">0,000</div>
<div class="t" style="left:1791.10px;top:532.86px;font-size:15.4px;line-height:15.4px;color:#000;transform:scaleX(0.9008);transform-origin:0 0;-webkit-text-stroke:0.08px;">0,00</div>
<div class="t" style="left:1823.90px;top:532.86px;font-size:15.4px;line-height:15.4px;color:#000;transform:scaleX(0.8591);transform-origin:0 0;-webkit-text-stroke:0.08px;">RAUD</div>
<div class="b" style="left:463.6px;top:551.2px;width:1453.6999999999998px;height:19px;background:#ffffff;"></div>
<div class="t" style="left:472.75px;top:552.86px;font-size:15.4px;line-height:15.4px;color:#000;transform:scaleX(0.9393);transform-origin:0 0;-webkit-text-stroke:0.08px;">12/06/2024</div>
<div class="t" style="left:557.50px;top:552.86px;font-size:15.4px;line-height:15.4px;color:#000;transform:scaleX(0.8664);transform-origin:0 0;-webkit-text-stroke:0.08px;">REC001</div>
<div class="t" style="left:648.80px;top:552.86px;font-size:15.4px;line-height:15.4px;color:#000;transform:scaleX(0.8757);transform-origin:0 0;-webkit-text-stroke:0.08px;">240600002</div>
<div class="t" style="left:740.20px;top:552.86px;font-size:15.4px;line-height:15.4px;color:#000;transform:scaleX(0.8757);transform-origin:0 0;-webkit-text-stroke:0.08px;">002</div>
<div class="t" style="left:791.80px;top:552.86px;font-size:15.4px;line-height:15.4px;color:#000;transform:scaleX(0.8591);transform-origin:0 0;-webkit-text-stroke:0.08px;">R</div>
<div class="t" style="left:823.00px;top:552.86px;font-size:15.4px;line-height:15.4px;color:#000;transform:scaleX(0.8591);transform-origin:0 0;-webkit-text-stroke:0.08px;">POSE</div>
<div class="t" style="left:954.20px;top:552.86px;font-size:15.4px;line-height:15.4px;color:#000;transform:scaleX(0.8591);transform-origin:0 0;-webkit-text-stroke:0.08px;">Pose</div>
<div class="t" style="left:1308.60px;top:552.86px;font-size:15.4px;line-height:15.4px;color:#000;transform:scaleX(0.8917);transform-origin:0 0;-webkit-text-stroke:0.08px;">20,000</div>
<div class="t" style="left:1390.40px;top:552.86px;font-size:15.4px;line-height:15.4px;color:#000;transform:scaleX(0.8917);transform-origin:0 0;-webkit-text-stroke:0.08px;">20,000</div>
<div class="t" style="left:1438.20px;top:552.86px;font-size:15.4px;line-height:15.4px;color:#000;transform:scaleX(0.8591);transform-origin:0 0;-webkit-text-stroke:0.08px;">Un</div>
<svg class="b" style="left:1517.6px;top:552.4000000000001px;" width="16.4" height="16.8" viewBox="0 0 16.400 16.800"><rect x="0.8" y="0.8" width="14.800" height="15.200" rx="1.200" fill="#fff" stroke="#6a6a6a" stroke-width="1.600"/></svg>
<div class="t" style="left:1571.50px;top:552.86px;font-size:15.4px;line-height:15.4px;color:#000;transform:scaleX(0.8952);transform-origin:0 0;-webkit-text-stroke:0.08px;">0,000</div>
<div class="t" style="left:1672.60px;top:552.86px;font-size:15.4px;line-height:15.4px;color:#000;transform:scaleX(0.8952);transform-origin:0 0;-webkit-text-stroke:0.08px;">0,000</div>
<div class="t" style="left:1791.10px;top:552.86px;font-size:15.4px;line-height:15.4px;color:#000;transform:scaleX(0.9008);transform-origin:0 0;-webkit-text-stroke:0.08px;">0,00</div>
<div class="t" style="left:1823.90px;top:552.86px;font-size:15.4px;line-height:15.4px;color:#000;transform:scaleX(0.8591);transform-origin:0 0;-webkit-text-stroke:0.08px;">RAUD</div>
<div class="b" style="left:463.6px;top:571.2px;width:1453.6999999999998px;height:19px;background:#efefef;"></div>
<div class="t" style="left:472.75px;top:572.86px;font-size:15.4px;line-height:15.4px;color:#000;transform:scaleX(0.9393);transform-origin:0 0;-webkit-text-stroke:0.08px;">12/06/2024</div>
<div class="t" style="left:557.50px;top:572.86px;font-size:15.4px;line-height:15.4px;color:#000;transform:scaleX(0.8664);transform-origin:0 0;-webkit-text-stroke:0.08px;">REC001</div>
<div class="t" style="left:648.80px;top:572.86px;font-size:15.4px;line-height:15.4px;color:#000;transform:scaleX(0.8757);transform-origin:0 0;-webkit-text-stroke:0.08px;">240600003</div>
<div class="t" style="left:740.20px;top:572.86px;font-size:15.4px;line-height:15.4px;color:#000;transform:scaleX(0.8757);transform-origin:0 0;-webkit-text-stroke:0.08px;">001</div>
<div class="t" style="left:791.80px;top:572.86px;font-size:15.4px;line-height:15.4px;color:#000;transform:scaleX(0.8591);transform-origin:0 0;-webkit-text-stroke:0.08px;">R</div>
<div class="t" style="left:823.00px;top:572.86px;font-size:15.4px;line-height:15.4px;color:#000;transform:scaleX(0.8591);transform-origin:0 0;-webkit-text-stroke:0.08px;">Pose</div>
<div class="t" style="left:954.20px;top:572.86px;font-size:15.4px;line-height:15.4px;color:#000;transform:scaleX(0.8591);transform-origin:0 0;-webkit-text-stroke:0.08px;">Pose</div>
<div class="t" style="left:1316.10px;top:572.86px;font-size:15.4px;line-height:15.4px;color:#000;transform:scaleX(0.8952);transform-origin:0 0;-webkit-text-stroke:0.08px;">8,000</div>
<div class="t" style="left:1397.90px;top:572.86px;font-size:15.4px;line-height:15.4px;color:#000;transform:scaleX(0.8952);transform-origin:0 0;-webkit-text-stroke:0.08px;">8,000</div>
<div class="t" style="left:1438.20px;top:572.86px;font-size:15.4px;line-height:15.4px;color:#000;transform:scaleX(0.8591);transform-origin:0 0;-webkit-text-stroke:0.08px;">Un</div>
<svg class="b" style="left:1517.6px;top:572.4000000000001px;" width="16.4" height="16.8" viewBox="0 0 16.400 16.800"><rect x="0.8" y="0.8" width="14.800" height="15.200" rx="1.200" fill="#fff" stroke="#6a6a6a" stroke-width="1.600"/></svg>
<div class="t" style="left:1571.50px;top:572.86px;font-size:15.4px;line-height:15.4px;color:#000;transform:scaleX(0.8952);transform-origin:0 0;-webkit-text-stroke:0.08px;">0,000</div>
<div class="t" style="left:1672.60px;top:572.86px;font-size:15.4px;line-height:15.4px;color:#000;transform:scaleX(0.8952);transform-origin:0 0;-webkit-text-stroke:0.08px;">0,000</div>
<div class="t" style="left:1791.10px;top:572.86px;font-size:15.4px;line-height:15.4px;color:#000;transform:scaleX(0.9008);transform-origin:0 0;-webkit-text-stroke:0.08px;">0,00</div>
<div class="t" style="left:1823.90px;top:572.86px;font-size:15.4px;line-height:15.4px;color:#000;transform:scaleX(0.8591);transform-origin:0 0;-webkit-text-stroke:0.08px;">RAUD</div>
<div class="b" style="left:463.6px;top:591.2px;width:1453.6999999999998px;height:19px;background:#ffffff;"></div>
<div class="t" style="left:472.75px;top:592.86px;font-size:15.4px;line-height:15.4px;color:#000;transform:scaleX(0.9393);transform-origin:0 0;-webkit-text-stroke:0.08px;">12/06/2024</div>
<div class="t" style="left:557.50px;top:592.86px;font-size:15.4px;line-height:15.4px;color:#000;transform:scaleX(0.8664);transform-origin:0 0;-webkit-text-stroke:0.08px;">REC001</div>
<div class="t" style="left:648.80px;top:592.86px;font-size:15.4px;line-height:15.4px;color:#000;transform:scaleX(0.8757);transform-origin:0 0;-webkit-text-stroke:0.08px;">240600003</div>
<div class="t" style="left:740.20px;top:592.86px;font-size:15.4px;line-height:15.4px;color:#000;transform:scaleX(0.8757);transform-origin:0 0;-webkit-text-stroke:0.08px;">002</div>
<div class="t" style="left:791.80px;top:592.86px;font-size:15.4px;line-height:15.4px;color:#000;transform:scaleX(0.8591);transform-origin:0 0;-webkit-text-stroke:0.08px;">R</div>
<div class="t" style="left:823.00px;top:592.86px;font-size:15.4px;line-height:15.4px;color:#000;transform:scaleX(0.8591);transform-origin:0 0;-webkit-text-stroke:0.08px;">POSE</div>
<div class="t" style="left:954.20px;top:592.86px;font-size:15.4px;line-height:15.4px;color:#000;transform:scaleX(0.8591);transform-origin:0 0;-webkit-text-stroke:0.08px;">Pose</div>
<div class="t" style="left:1308.60px;top:592.86px;font-size:15.4px;line-height:15.4px;color:#000;transform:scaleX(0.8917);transform-origin:0 0;-webkit-text-stroke:0.08px;">20,000</div>
<div class="t" style="left:1390.40px;top:592.86px;font-size:15.4px;line-height:15.4px;color:#000;transform:scaleX(0.8917);transform-origin:0 0;-webkit-text-stroke:0.08px;">20,000</div>
<div class="t" style="left:1438.20px;top:592.86px;font-size:15.4px;line-height:15.4px;color:#000;transform:scaleX(0.8591);transform-origin:0 0;-webkit-text-stroke:0.08px;">Un</div>
<svg class="b" style="left:1517.6px;top:592.4000000000001px;" width="16.4" height="16.8" viewBox="0 0 16.400 16.800"><rect x="0.8" y="0.8" width="14.800" height="15.200" rx="1.200" fill="#fff" stroke="#6a6a6a" stroke-width="1.600"/></svg>
<div class="t" style="left:1571.50px;top:592.86px;font-size:15.4px;line-height:15.4px;color:#000;transform:scaleX(0.8952);transform-origin:0 0;-webkit-text-stroke:0.08px;">0,000</div>
<div class="t" style="left:1672.60px;top:592.86px;font-size:15.4px;line-height:15.4px;color:#000;transform:scaleX(0.8952);transform-origin:0 0;-webkit-text-stroke:0.08px;">0,000</div>
<div class="t" style="left:1791.10px;top:592.86px;font-size:15.4px;line-height:15.4px;color:#000;transform:scaleX(0.9008);transform-origin:0 0;-webkit-text-stroke:0.08px;">0,00</div>
<div class="t" style="left:1823.90px;top:592.86px;font-size:15.4px;line-height:15.4px;color:#000;transform:scaleX(0.8591);transform-origin:0 0;-webkit-text-stroke:0.08px;">RAUD</div>
<div class="b" style="left:463.6px;top:611.2px;width:1453.6999999999998px;height:19px;background:#efefef;"></div>
<div class="t" style="left:472.75px;top:612.86px;font-size:15.4px;line-height:15.4px;color:#000;transform:scaleX(0.9393);transform-origin:0 0;-webkit-text-stroke:0.08px;">30/05/2024</div>
<div class="t" style="left:557.50px;top:612.86px;font-size:15.4px;line-height:15.4px;color:#000;transform:scaleX(0.8664);transform-origin:0 0;-webkit-text-stroke:0.08px;">REC001</div>
<div class="t" style="left:648.80px;top:612.86px;font-size:15.4px;line-height:15.4px;color:#000;transform:scaleX(0.8757);transform-origin:0 0;-webkit-text-stroke:0.08px;">240500003</div>
<div class="t" style="left:740.20px;top:612.86px;font-size:15.4px;line-height:15.4px;color:#000;transform:scaleX(0.8757);transform-origin:0 0;-webkit-text-stroke:0.08px;">001</div>
<div class="t" style="left:791.80px;top:612.86px;font-size:15.4px;line-height:15.4px;color:#000;transform:scaleX(0.8591);transform-origin:0 0;-webkit-text-stroke:0.08px;">R</div>
<div class="t" style="left:823.00px;top:612.86px;font-size:15.4px;line-height:15.4px;color:#000;transform:scaleX(0.8729);transform-origin:0 0;-webkit-text-stroke:0.08px;">065001B</div>
<div class="t" style="left:954.20px;top:612.86px;font-size:15.4px;line-height:15.4px;color:#000;transform:scaleX(0.8628);transform-origin:0 0;-webkit-text-stroke:0.08px;">Joue 28 profil talon 95 sans patte dodécagone 4viS</div>
<div class="t" style="left:1301.10px;top:612.86px;font-size:15.4px;line-height:15.4px;color:#000;transform:scaleX(0.8892);transform-origin:0 0;-webkit-text-stroke:0.08px;">750,000</div>
<div class="t" style="left:1382.90px;top:612.86px;font-size:15.4px;line-height:15.4px;color:#000;transform:scaleX(0.8892);transform-origin:0 0;-webkit-text-stroke:0.08px;">750,000</div>
<div class="t" style="left:1438.20px;top:612.86px;font-size:15.4px;line-height:15.4px;color:#000;transform:scaleX(0.8591);transform-origin:0 0;-webkit-text-stroke:0.08px;">Un</div>
<svg class="b" style="left:1517.6px;top:612.4000000000001px;" width="16.4" height="16.8" viewBox="0 0 16.400 16.800"><rect x="0.8" y="0.8" width="14.800" height="15.200" rx="1.200" fill="#fff" stroke="#6a6a6a" stroke-width="1.600"/></svg>
<div class="t" style="left:1571.50px;top:612.86px;font-size:15.4px;line-height:15.4px;color:#000;transform:scaleX(0.9226);transform-origin:0 0;-webkit-text-stroke:0.08px;">0,110</div>
<div class="t" style="left:1672.60px;top:612.86px;font-size:15.4px;line-height:15.4px;color:#000;transform:scaleX(0.8952);transform-origin:0 0;-webkit-text-stroke:0.08px;">0,000</div>
<div class="t" style="left:1791.10px;top:612.86px;font-size:15.4px;line-height:15.4px;color:#000;transform:scaleX(0.9008);transform-origin:0 0;-webkit-text-stroke:0.08px;">0,00</div>
<div class="t" style="left:1823.90px;top:612.86px;font-size:15.4px;line-height:15.4px;color:#000;transform:scaleX(0.8591);transform-origin:0 0;-webkit-text-stroke:0.08px;">STIC</div>
<div class="b" style="left:463.6px;top:631.2px;width:1453.6999999999998px;height:19px;background:#ffffff;"></div>
<div class="t" style="left:472.75px;top:632.86px;font-size:15.4px;line-height:15.4px;color:#000;transform:scaleX(0.9393);transform-origin:0 0;-webkit-text-stroke:0.08px;">27/05/2024</div>
<div class="t" style="left:557.50px;top:632.86px;font-size:15.4px;line-height:15.4px;color:#000;transform:scaleX(0.8664);transform-origin:0 0;-webkit-text-stroke:0.08px;">REC001</div>
<div class="t" style="left:648.80px;top:632.86px;font-size:15.4px;line-height:15.4px;color:#000;transform:scaleX(0.8757);transform-origin:0 0;-webkit-text-stroke:0.08px;">240500001</div>
<div class="t" style="left:740.20px;top:632.86px;font-size:15.4px;line-height:15.4px;color:#000;transform:scaleX(0.8757);transform-origin:0 0;-webkit-text-stroke:0.08px;">001</div>
<div class="t" style="left:791.80px;top:632.86px;font-size:15.4px;line-height:15.4px;color:#000;transform:scaleX(0.8591);transform-origin:0 0;-webkit-text-stroke:0.08px;">C</div>
<div class="t" style="left:823.00px;top:632.86px;font-size:15.4px;line-height:15.4px;color:#000;transform:scaleX(0.9142);transform-origin:0 0;-webkit-text-stroke:0.08px;">C240500001/01/1</div>
<div class="t" style="left:954.20px;top:632.86px;font-size:15.4px;line-height:15.4px;color:#000;transform:scaleX(0.8740);transform-origin:0 0;-webkit-text-stroke:0.08px;">Vitrage : H x L : 1326 x 462 Type : 4FE-20-4</div>
<div class="t" style="left:1316.10px;top:632.86px;font-size:15.4px;line-height:15.4px;color:#000;transform:scaleX(0.8952);transform-origin:0 0;-webkit-text-stroke:0.08px;">2,000</div>
<div class="t" style="left:1397.90px;top:632.86px;font-size:15.4px;line-height:15.4px;color:#000;transform:scaleX(0.8952);transform-origin:0 0;-webkit-text-stroke:0.08px;">2,000</div>
<div class="t" style="left:1438.20px;top:632.86px;font-size:15.4px;line-height:15.4px;color:#000;transform:scaleX(0.8591);transform-origin:0 0;-webkit-text-stroke:0.08px;">UN</div>
<svg class="b" style="left:1517.6px;top:632.4000000000001px;" width="16.4" height="16.8" viewBox="0 0 16.400 16.800"><rect x="0.8" y="0.8" width="14.800" height="15.200" rx="1.200" fill="#fff" stroke="#6a6a6a" stroke-width="1.600"/></svg>
<div class="t" style="left:1571.50px;top:632.86px;font-size:15.4px;line-height:15.4px;color:#000;transform:scaleX(0.8952);transform-origin:0 0;-webkit-text-stroke:0.08px;">8,740</div>
<div class="t" style="left:1657.60px;top:632.86px;font-size:15.4px;line-height:15.4px;color:#000;transform:scaleX(0.9078);transform-origin:0 0;-webkit-text-stroke:0.08px;">112,500</div>
<div class="t" style="left:1791.10px;top:632.86px;font-size:15.4px;line-height:15.4px;color:#000;transform:scaleX(0.9008);transform-origin:0 0;-webkit-text-stroke:0.08px;">0,00</div>
<div class="t" style="left:1823.90px;top:632.86px;font-size:15.4px;line-height:15.4px;color:#000;transform:scaleX(0.8591);transform-origin:0 0;-webkit-text-stroke:0.08px;">SOVERISOVI</div>
<div class="b" style="left:463.6px;top:651.2px;width:1453.6999999999998px;height:19px;background:#efefef;"></div>
<div class="t" style="left:472.75px;top:652.86px;font-size:15.4px;line-height:15.4px;color:#000;transform:scaleX(0.9393);transform-origin:0 0;-webkit-text-stroke:0.08px;">27/05/2024</div>
<div class="t" style="left:557.50px;top:652.86px;font-size:15.4px;line-height:15.4px;color:#000;transform:scaleX(0.8664);transform-origin:0 0;-webkit-text-stroke:0.08px;">REC001</div>
<div class="t" style="left:648.80px;top:652.86px;font-size:15.4px;line-height:15.4px;color:#000;transform:scaleX(0.8757);transform-origin:0 0;-webkit-text-stroke:0.08px;">240500001</div>
<div class="t" style="left:740.20px;top:652.86px;font-size:15.4px;line-height:15.4px;color:#000;transform:scaleX(0.8757);transform-origin:0 0;-webkit-text-stroke:0.08px;">002</div>
<div class="t" style="left:791.80px;top:652.86px;font-size:15.4px;line-height:15.4px;color:#000;transform:scaleX(0.8591);transform-origin:0 0;-webkit-text-stroke:0.08px;">C</div>
<div class="t" style="left:823.00px;top:652.86px;font-size:15.4px;line-height:15.4px;color:#000;transform:scaleX(0.9142);transform-origin:0 0;-webkit-text-stroke:0.08px;">C240500001/01/2</div>
<div class="t" style="left:954.20px;top:652.86px;font-size:15.4px;line-height:15.4px;color:#000;transform:scaleX(0.8740);transform-origin:0 0;-webkit-text-stroke:0.08px;">Vitrage : H x L : 1326 x 462 Type : 4FE-20-4</div>
<div class="t" style="left:1316.10px;top:652.86px;font-size:15.4px;line-height:15.4px;color:#000;transform:scaleX(0.8952);transform-origin:0 0;-webkit-text-stroke:0.08px;">2,000</div>
<div class="t" style="left:1397.90px;top:652.86px;font-size:15.4px;line-height:15.4px;color:#000;transform:scaleX(0.8952);transform-origin:0 0;-webkit-text-stroke:0.08px;">2,000</div>
<div class="t" style="left:1438.20px;top:652.86px;font-size:15.4px;line-height:15.4px;color:#000;transform:scaleX(0.8591);transform-origin:0 0;-webkit-text-stroke:0.08px;">UN</div>
<svg class="b" style="left:1517.6px;top:652.4000000000001px;" width="16.4" height="16.8" viewBox="0 0 16.400 16.800"><rect x="0.8" y="0.8" width="14.800" height="15.200" rx="1.200" fill="#fff" stroke="#6a6a6a" stroke-width="1.600"/></svg>
<div class="t" style="left:1571.50px;top:652.86px;font-size:15.4px;line-height:15.4px;color:#000;transform:scaleX(0.8952);transform-origin:0 0;-webkit-text-stroke:0.08px;">8,740</div>
<div class="t" style="left:1657.60px;top:652.86px;font-size:15.4px;line-height:15.4px;color:#000;transform:scaleX(0.9078);transform-origin:0 0;-webkit-text-stroke:0.08px;">112,500</div>
<div class="t" style="left:1791.10px;top:652.86px;font-size:15.4px;line-height:15.4px;color:#000;transform:scaleX(0.9008);transform-origin:0 0;-webkit-text-stroke:0.08px;">0,00</div>
<div class="t" style="left:1823.90px;top:652.86px;font-size:15.4px;line-height:15.4px;color:#000;transform:scaleX(0.8591);transform-origin:0 0;-webkit-text-stroke:0.08px;">SOVERISOVI</div>
<div class="b" style="left:463.6px;top:671.2px;width:1453.6999999999998px;height:19px;background:#ffffff;"></div>
<div class="t" style="left:472.75px;top:672.86px;font-size:15.4px;line-height:15.4px;color:#000;transform:scaleX(0.9393);transform-origin:0 0;-webkit-text-stroke:0.08px;">27/05/2024</div>
<div class="t" style="left:557.50px;top:672.86px;font-size:15.4px;line-height:15.4px;color:#000;transform:scaleX(0.8664);transform-origin:0 0;-webkit-text-stroke:0.08px;">REC001</div>
<div class="t" style="left:648.80px;top:672.86px;font-size:15.4px;line-height:15.4px;color:#000;transform:scaleX(0.8757);transform-origin:0 0;-webkit-text-stroke:0.08px;">240500002</div>
<div class="t" style="left:740.20px;top:672.86px;font-size:15.4px;line-height:15.4px;color:#000;transform:scaleX(0.8757);transform-origin:0 0;-webkit-text-stroke:0.08px;">001</div>
<div class="t" style="left:791.80px;top:672.86px;font-size:15.4px;line-height:15.4px;color:#000;transform:scaleX(0.8591);transform-origin:0 0;-webkit-text-stroke:0.08px;">C</div>
<div class="t" style="left:823.00px;top:672.86px;font-size:15.4px;line-height:15.4px;color:#000;transform:scaleX(0.8964);transform-origin:0 0;-webkit-text-stroke:0.08px;">C240500001/03</div>
<div class="t" style="left:954.20px;top:672.86px;font-size:15.4px;line-height:15.4px;color:#000;transform:scaleX(0.8649);transform-origin:0 0;-webkit-text-stroke:0.08px;">Fenêtre 1 vantail  Hauteur 1350 Largeur 800 mm -</div>
<div class="t" style="left:1316.10px;top:672.86px;font-size:15.4px;line-height:15.4px;color:#000;transform:scaleX(0.8952);transform-origin:0 0;-webkit-text-stroke:0.08px;">1,000</div>
<div class="t" style="left:1397.90px;top:672.86px;font-size:15.4px;line-height:15.4px;color:#000;transform:scaleX(0.8952);transform-origin:0 0;-webkit-text-stroke:0.08px;">1,000</div>
<div class="t" style="left:1438.20px;top:672.86px;font-size:15.4px;line-height:15.4px;color:#000;transform:scaleX(0.8591);transform-origin:0 0;-webkit-text-stroke:0.08px;">Un</div>
<svg class="b" style="left:1517.6px;top:672.4000000000001px;" width="16.4" height="16.8" viewBox="0 0 16.400 16.800"><rect x="0.8" y="0.8" width="14.800" height="15.200" rx="1.200" fill="#fff" stroke="#6a6a6a" stroke-width="1.600"/></svg>
<div class="t" style="left:1571.50px;top:672.86px;font-size:15.4px;line-height:15.4px;color:#000;transform:scaleX(0.8952);transform-origin:0 0;-webkit-text-stroke:0.08px;">0,000</div>
<div class="t" style="left:1672.60px;top:672.86px;font-size:15.4px;line-height:15.4px;color:#000;transform:scaleX(0.8952);transform-origin:0 0;-webkit-text-stroke:0.08px;">0,000</div>
<div class="t" style="left:1791.10px;top:672.86px;font-size:15.4px;line-height:15.4px;color:#000;transform:scaleX(0.9008);transform-origin:0 0;-webkit-text-stroke:0.08px;">0,00</div>
<div class="t" style="left:1823.90px;top:672.86px;font-size:15.4px;line-height:15.4px;color:#000;transform:scaleX(0.8591);transform-origin:0 0;-webkit-text-stroke:0.08px;">HODOOR</div>
</div>
<div class="hl" style="left:463.6px;top:290.2px;width:1453.7px;"></div>
<div class="hl" style="left:463.6px;top:310.2px;width:1453.7px;"></div>
<div class="hl" style="left:463.6px;top:330.2px;width:1453.7px;"></div>
<div class="hl" style="left:463.6px;top:350.2px;width:1453.7px;"></div>
<div class="hl" style="left:463.6px;top:370.2px;width:1453.7px;"></div>
<div class="hl" style="left:463.6px;top:390.2px;width:1453.7px;"></div>
<div class="hl" style="left:463.6px;top:410.2px;width:1453.7px;"></div>
<div class="hl" style="left:463.6px;top:430.2px;width:1453.7px;"></div>
<div class="hl" style="left:463.6px;top:450.2px;width:1453.7px;"></div>
<div class="hl" style="left:463.6px;top:470.2px;width:1453.7px;"></div>
<div class="hl" style="left:463.6px;top:490.2px;width:1453.7px;"></div>
<div class="hl" style="left:463.6px;top:510.2px;width:1453.7px;"></div>
<div class="hl" style="left:463.6px;top:530.2px;width:1453.7px;"></div>
<div class="hl" style="left:463.6px;top:550.2px;width:1453.7px;"></div>
<div class="hl" style="left:463.6px;top:570.2px;width:1453.7px;"></div>
<div class="hl" style="left:463.6px;top:590.2px;width:1453.7px;"></div>
<div class="hl" style="left:463.6px;top:610.2px;width:1453.7px;"></div>
<div class="hl" style="left:463.6px;top:630.2px;width:1453.7px;"></div>
<div class="hl" style="left:463.6px;top:650.2px;width:1453.7px;"></div>
<div class="hl" style="left:463.6px;top:670.2px;width:1453.7px;"></div>
<div class="hl" style="left:463.6px;top:690.2px;width:1453.7px;"></div>
<div class="vl" style="left:553.6px;top:271px;height:420px;"></div>
<div class="vl" style="left:644.9px;top:271px;height:420px;"></div>
<div class="vl" style="left:736.3px;top:271px;height:420px;"></div>
<div class="vl" style="left:787.9px;top:271px;height:420px;"></div>
<div class="vl" style="left:819.1px;top:271px;height:420px;"></div>
<div class="vl" style="left:950.3px;top:271px;height:420px;"></div>
<div class="vl" style="left:1271.3px;top:271px;height:420px;"></div>
<div class="vl" style="left:1352.5px;top:271px;height:420px;"></div>
<div class="vl" style="left:1434.3px;top:271px;height:420px;"></div>
<div class="vl" style="left:1505.5px;top:271px;height:420px;"></div>
<div class="vl" style="left:1546.0px;top:271px;height:420px;"></div>
<div class="vl" style="left:1607.9px;top:271px;height:420px;"></div>
<div class="vl" style="left:1709.0px;top:271px;height:420px;"></div>
<div class="vl" style="left:1820.0px;top:271px;height:420px;"></div>
<div class="b" style="left:463.8px;top:691.2px;width:1454px;height:1.5px;background:#b4b4b4;"></div>
<div class="b" style="left:1917.3px;top:245px;width:1.3px;height:581px;background:#8c8c8c;"></div>
<div class="b" style="left:1918.6px;top:245px;width:1.4px;height:581px;background:#e6e6e6;"></div>
<svg class="b" style="left:765px;top:792px;" width="24" height="34" viewBox="0 0 24 34"><path d="M4 5.200 V24.600 L8.300 20.500 L13.600 30.800 H17.300 V27.600 L13.300 19 H18.600 Z" fill="#fff" stroke="#000" stroke-width="1.900" stroke-linejoin="miter" stroke-miterlimit="6"/></svg>
</body></html>
